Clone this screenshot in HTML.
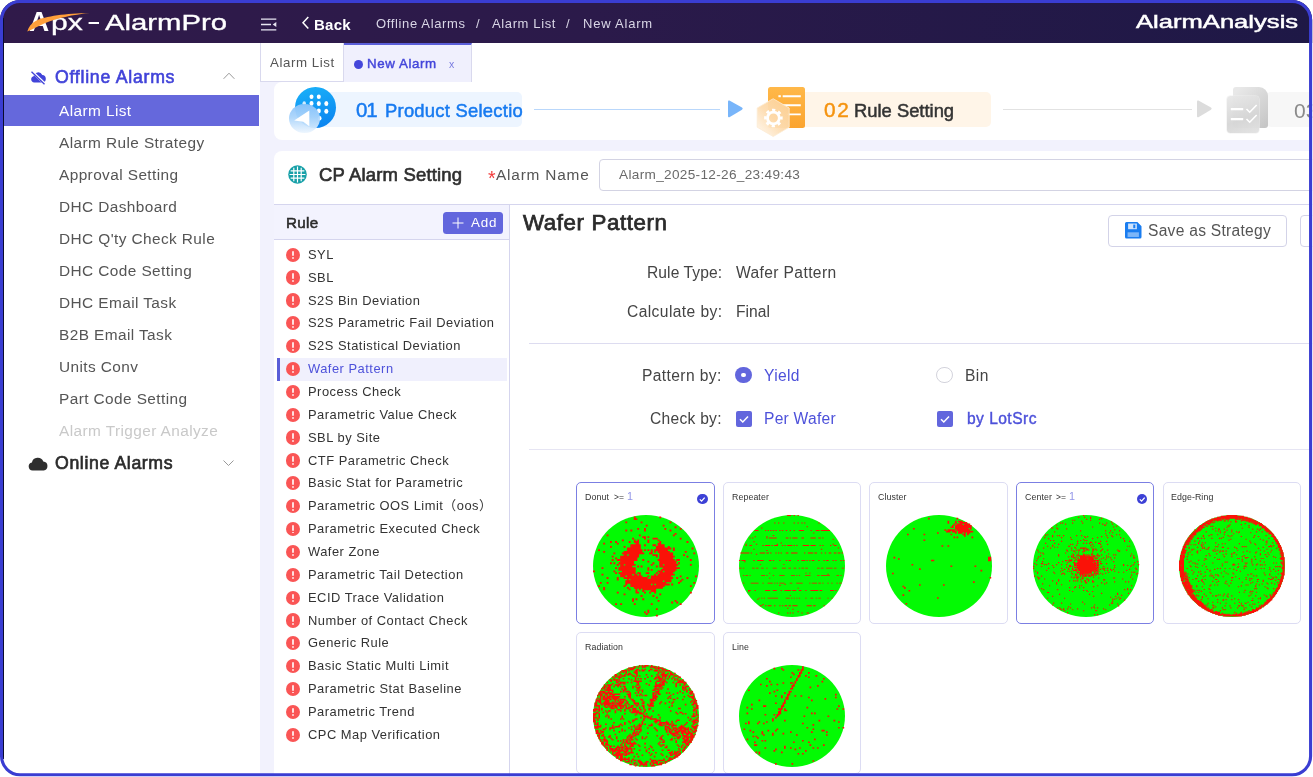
<!DOCTYPE html>
<html lang="en">
<head>
<meta charset="utf-8">
<title>Apx - AlarmPro</title>
<style>
*{box-sizing:border-box;margin:0;padding:0}
html,body{width:1313px;height:777px;overflow:hidden;background:#f2f2fd}
body{font-family:"Liberation Sans","Noto Sans CJK SC",sans-serif;color:#444;position:relative}
#frame{position:absolute;left:0;top:0;z-index:100}
#blk{position:absolute;left:3px;top:18px;width:1.2px;height:741px;background:#07071a;z-index:99}
.abs{position:absolute}
#hdr{position:absolute;left:0;top:0;width:1313px;height:43px;background:linear-gradient(90deg,#301a4a 0%,#2b1a4a 45%,#1e1846 100%)}
#side{position:absolute;left:4px;top:43px;width:256px;height:734px;background:#fff}
.t{position:absolute;white-space:nowrap;line-height:1;will-change:transform}
.mi{position:absolute;left:4px;width:255.3px;height:31.2px}
.mi.sel{background:#6568dc}
.card{position:absolute;background:#fff;border-radius:8px}
.ic{position:absolute;left:286.2px;width:14.2px;height:14.2px;border-radius:50%;background:#fa5555}
.ic:before{content:"";position:absolute;left:6.1px;top:3px;width:2px;height:5.6px;background:rgba(255,255,255,.82);border-radius:1px}
.ic:after{content:"";position:absolute;left:6.1px;top:9.6px;width:2px;height:1.9px;background:rgba(255,255,255,.82);border-radius:1px}
.wc{position:absolute;width:138.4px;height:141.4px;border:1px solid #dcdcf3;border-radius:5px;background:#fff}
.wc.on{border-color:#7b7fe3;border-top-width:1.6px}
.wf{position:absolute;left:12.6px;top:28.7px}
.ck{position:absolute;width:10.4px;height:10.4px;border-radius:50%;background:#3d41d6}
</style>
</head>
<body>
<!-- header -->
<div id="hdr"></div>
<svg class="abs" style="left:261px;top:18px" width="16" height="13" viewBox="0 0 16 13"><path d="M0 1.2h15.3M0 6.5h10M0 11.8h15.3" stroke="#e8e6f2" stroke-width="1.3" fill="none"/><path d="M15.3 4v5l-3.6-2.5z" fill="#e8e6f2"/></svg>
<svg class="abs" style="left:300.5px;top:15.8px" width="9" height="14" viewBox="0 0 9 14"><path d="M7.3 1L2 6.8l5.3 5.8" stroke="#fff" stroke-width="1.5" fill="none"/></svg>

<!-- sidebar -->
<div id="side"></div>
<svg class="abs" style="left:29.5px;top:69.5px" width="17" height="15" viewBox="0 0 17 15"><path d="M4.2 12.5a3.2 3.2 0 0 1-.6-6.3A4.6 4.6 0 0 1 12.3 5a3.8 3.8 0 0 1 .5 7.5z" fill="#4143d9"/><path d="M1.5 1l13.5 13" stroke="#fff" stroke-width="2.6"/><path d="M1.5 1.8l13 12.4" stroke="#4143d9" stroke-width="1.3"/></svg>
<svg class="abs" style="left:223px;top:72px" width="12" height="8" viewBox="0 0 12 8"><path d="M.6 6.8l5.4-5.6 5.4 5.6" stroke="#999" stroke-width="1" fill="none"/></svg>
<div class="mi sel" style="top:95px"></div>
<svg class="abs" style="left:27.5px;top:457px" width="20" height="13.5" viewBox="0 0 20 13.5"><path d="M4.6 13.5a4.1 4.1 0 0 1-.7-8.1A6 6 0 0 1 15.3 4.4a4.6 4.6 0 0 1 .4 9.1z" fill="#2e2e2e"/></svg>
<svg class="abs" style="left:222.5px;top:460px" width="11" height="6" viewBox="0 0 11 6"><path d="M.5.5l5 5 5-5" stroke="#999" stroke-width="1" fill="none"/></svg>

<!-- tabs -->
<div class="abs" style="left:260px;top:43px;width:1060px;height:39.4px;background:#fff"></div>
<div class="abs" style="left:260px;top:43px;width:84px;height:38.5px;background:#fff;border:1px solid #d9d9ee;border-top:none"></div>
<div class="abs" style="left:344px;top:43px;width:128px;height:38.5px;background:#f0f0fd;border-right:1px solid #d9d9ee;border-top:2.2px solid #5a5ed8"></div>
<div class="abs" style="left:354.3px;top:59.5px;width:9px;height:9px;border-radius:50%;background:#4446da"></div>

<!-- steps card -->
<div class="card" style="left:274px;top:82px;width:1045px;height:57.9px"></div>
<div class="abs" style="left:320px;top:92px;width:202.4px;height:34.8px;background:#edf5ff;border-radius:5px"></div>
<div class="abs" style="left:294.8px;top:86.8px;width:40.8px;height:40.8px;border-radius:50%;background:linear-gradient(165deg,#1ab2f9,#0a80ef)"></div>
<svg class="abs" style="left:294.8px;top:86.8px" width="40.8" height="40.8" viewBox="0 0 40.8 40.8"><g fill="#fff"><ellipse cx="16.5" cy="9.7" rx="2" ry="2.2"/><ellipse cx="23.8" cy="9.7" rx="2" ry="2.2"/><ellipse cx="9.2" cy="16.2" rx="1.7" ry="1.9" opacity=".8"/><ellipse cx="16.5" cy="16.4" rx="2" ry="2.3"/><ellipse cx="23.8" cy="16.6" rx="2" ry="2.5"/><ellipse cx="31.3" cy="16.6" rx="2" ry="2.5"/><ellipse cx="23.8" cy="24" rx="2" ry="2.4"/><ellipse cx="31.3" cy="24.2" rx="2" ry="2.5"/><ellipse cx="24.7" cy="31.3" rx="1.8" ry="2.2"/></g></svg>
<div class="abs" style="left:288.9px;top:103.6px;width:31.3px;height:29.8px;border-radius:50%;background:linear-gradient(180deg,rgba(138,195,250,.96) 0%,rgba(170,212,251,.95) 45%,rgba(236,245,254,.92) 100%)"></div>
<svg class="abs" style="left:288.9px;top:103.6px" width="31.3" height="29.8" viewBox="0 0 31.3 29.8"><path d="M20.3 6.6V22.2L14.3 17.8 5.2 16.6z" fill="#fff"/></svg>
<div class="abs" style="left:534px;top:108.9px;width:185.5px;height:1px;background:#b9d7fb"></div>
<svg class="abs" style="left:727px;top:99px" width="17" height="20" viewBox="0 0 17 20"><path d="M1 2.5Q1 1 2.4 1.6L15 8.6Q16.5 9.7 15 10.8L2.4 18.2Q1 18.8 1 17.3Z" fill="#78b5fa"/></svg>

<div class="abs" style="left:793px;top:92px;width:198.3px;height:34.8px;background:#fff5e8;border-radius:5px"></div>
<div class="abs" style="left:768.2px;top:87px;width:36.8px;height:41.3px;border-radius:2.5px;background:linear-gradient(180deg,#ffb849,#fba42f)"></div>
<svg class="abs" style="left:768.2px;top:87px" width="36.8" height="41.3" viewBox="0 0 36.8 41.3"><path d="M14.7 9.2H32.8M13.8 18.3H32.8M18.8 27.4H32.8" stroke="#fff" stroke-width="1.9"/><rect x="10.4" y="8.2" width="2.4" height="2" fill="#fff"/></svg>
<svg class="abs" style="left:756px;top:97.5px" width="34" height="40" viewBox="0 0 34 40"><defs><linearGradient id="hx" x1="1" y1="0" x2="0.1" y2="1"><stop offset="0" stop-color="#fccf92" stop-opacity=".97"/><stop offset=".55" stop-color="#fddcb0" stop-opacity=".95"/><stop offset="1" stop-color="#fff6ea" stop-opacity=".92"/></linearGradient></defs><path d="M17.2 0.7L33.2 10V29.2L17.2 38.5 1.2 29.2V10Z" fill="url(#hx)" stroke="#fdebd3" stroke-width=".8" stroke-linejoin="round"/><g transform="translate(17.4 20)"><circle r="8" fill="none" stroke="#fff" stroke-width="2.6" stroke-dasharray="3.14 3.143" transform="rotate(-11)"/><circle r="5.9" fill="none" stroke="#fff" stroke-width="2.8"/></g></svg>
<div class="abs" style="left:1003px;top:108.8px;width:189px;height:1px;background:#e2e2e2"></div>
<svg class="abs" style="left:1195.5px;top:99.2px" width="17" height="20" viewBox="0 0 17 20"><path d="M1 2.5Q1 1 2.4 1.6L15 8.6Q16.5 9.7 15 10.8L2.4 18.2Q1 18.8 1 17.3Z" fill="#dcdcdc"/></svg>
<div class="abs" style="left:1266px;top:92px;width:50px;height:34.8px;background:#f7f7f7;border-radius:5px 0 0 5px"></div>
<div class="abs" style="left:1233.1px;top:87.1px;width:35.2px;height:41.2px;border-radius:3px 9px 3px 3px;background:linear-gradient(135deg,#e8e8e8 10%,#c6c6c6 95%)"></div>
<div class="abs" style="left:1227px;top:95.8px;width:32.4px;height:37.5px;border-radius:3.5px;background:linear-gradient(160deg,rgba(232,232,232,.96),rgba(214,214,214,.96) 60%,rgba(226,226,226,.96));box-shadow:0 0 0 .6px rgba(238,238,238,.9)"></div>
<svg class="abs" style="left:1227px;top:95.8px" width="32.4" height="37.5" viewBox="0 0 32.4 37.5"><path d="M3.8 13.2h12.4M3.8 23.2h12.4" stroke="#fff" stroke-width="2.3"/><path d="M19.5 13l3.2 3.2 7-7.2M19.5 23l3.2 3.2 7-7.2" stroke="#fff" stroke-width="1.6" fill="none"/></svg>

<!-- CP Alarm Setting card -->
<div class="card" style="left:274px;top:150.5px;width:1045px;height:640px;border-radius:8px 0 0 0"></div>
<svg class="abs" style="left:287.7px;top:165.3px" width="19" height="19" viewBox="0 0 18 18"><circle cx="9" cy="9" r="8.8" fill="#17a0a8"/><path d="M5.5 2.5v13M9 1.5v15M12.5 2.5v13M2.5 5.5h13M1.5 9h15M2.5 12.5h13" stroke="#fff" stroke-width="1.1"/></svg>
<div class="abs" style="left:599.4px;top:159.3px;width:730px;height:31.6px;border:1px solid #d3d3e3;border-radius:4px;background:#fff"></div>

<!-- rule panel -->
<div class="abs" style="left:274px;top:204px;width:1045px;height:1px;background:#d5d5ee"></div>
<div class="abs" style="left:274px;top:205px;width:235px;height:34px;background:#f3f3fe"></div>
<div class="abs" style="left:274px;top:239px;width:235px;height:1px;background:#d5d5ee"></div>
<div class="abs" style="left:509px;top:204px;width:1px;height:580px;background:#d5d5ee"></div>
<div class="abs" style="left:443.3px;top:212px;width:59.7px;height:22px;border-radius:3.5px;background:#6266dd"></div>
<svg class="abs" style="left:451.5px;top:217px" width="12" height="12" viewBox="0 0 12 12"><path d="M6 .5v11M.5 6h11" stroke="#fff" stroke-width="1"/></svg>
<div class="abs" style="left:276.5px;top:358px;width:230px;height:22.8px;background:#f0f0fd"></div>
<div class="abs" style="left:276.5px;top:358px;width:3px;height:22.8px;background:#5a5ed8"></div>
<div class="ic" style="top:247.6px"></div>
<div class="ic" style="top:270.46px"></div>
<div class="ic" style="top:293.32px"></div>
<div class="ic" style="top:316.18px"></div>
<div class="ic" style="top:339.04px"></div>
<div class="ic" style="top:361.9px"></div>
<div class="ic" style="top:384.76px"></div>
<div class="ic" style="top:407.62px"></div>
<div class="ic" style="top:430.48px"></div>
<div class="ic" style="top:453.34px"></div>
<div class="ic" style="top:476.2px"></div>
<div class="ic" style="top:499.06px"></div>
<div class="ic" style="top:521.92px"></div>
<div class="ic" style="top:544.78px"></div>
<div class="ic" style="top:567.64px"></div>
<div class="ic" style="top:590.5px"></div>
<div class="ic" style="top:613.36px"></div>
<div class="ic" style="top:636.22px"></div>
<div class="ic" style="top:659.08px"></div>
<div class="ic" style="top:681.94px"></div>
<div class="ic" style="top:704.8px"></div>
<div class="ic" style="top:727.66px"></div>

<!-- detail panel -->
<div class="abs" style="left:1108.4px;top:215.4px;width:179px;height:32.1px;border:1px solid #d3d3e8;border-radius:4px;background:#fff"></div>
<svg class="abs" style="left:1125px;top:222px" width="16.5" height="16.5" viewBox="0 0 16 16"><path d="M1.5 0h10.5l4 4v10.5a1.5 1.5 0 0 1-1.5 1.5h-13a1.5 1.5 0 0 1-1.5-1.5v-13a1.5 1.5 0 0 1 1.5-1.5z" fill="#1a7df0"/><rect x="3" y="1.5" width="8.5" height="5.5" fill="#cfe4fd"/><rect x="8" y="2.5" width="2" height="3.5" fill="#1a7df0"/><rect x="2.5" y="10" width="11" height="4.5" fill="#7db6f8"/></svg>
<div class="abs" style="left:1300.4px;top:215.4px;width:30px;height:32.1px;border:1px solid #d3d3e8;border-radius:4px;background:#fff"></div>

<div class="abs" style="left:529px;top:343px;width:790px;height:1px;background:#dddcf0"></div>
<div class="abs" style="left:735.4px;top:367px;width:16.2px;height:16.2px;border-radius:50%;background:#6266dd"></div><div class="abs" style="left:741.3px;top:372.9px;width:4.4px;height:4.4px;border-radius:50%;background:#fff"></div>
<div class="abs" style="left:936.4px;top:367px;width:16.2px;height:16.2px;border-radius:50%;background:#fff;border:1px solid #d3d3dc"></div>
<div class="abs" style="left:735.5px;top:410.8px;width:16.2px;height:16px;border-radius:2px;background:#6266dd"></div>
<svg class="abs" style="left:735.5px;top:410.8px" width="16" height="16" viewBox="0 0 16 16"><path d="M4 8.2l2.8 2.8 5.2-5.6" stroke="#fff" stroke-width="1.5" fill="none"/></svg>
<div class="abs" style="left:936.5px;top:410.8px;width:16.2px;height:16px;border-radius:2px;background:#6266dd"></div>
<svg class="abs" style="left:936.5px;top:410.8px" width="16" height="16" viewBox="0 0 16 16"><path d="M4 8.2l2.8 2.8 5.2-5.6" stroke="#fff" stroke-width="1.5" fill="none"/></svg>
<div class="abs" style="left:529px;top:449px;width:790px;height:1px;background:#e6e5f3"></div>

<!-- wafer cards -->
<div class="wc on" style="left:576.2px;top:482.4px"><div class="ck" style="left:120.1px;top:10.5px"></div><svg class="abs" style="left:120.1px;top:10.5px" width="10.4" height="10.4" viewBox="0 0 10 10"><path d="M2.7 5.2l1.7 1.7 3-3.4" stroke="#fff" stroke-width="1.2" fill="none"/></svg><svg class="wf" width="112" height="107.8" viewBox="-56 -56 112 112" preserveAspectRatio="none"><circle r="53" fill="#03fa03"/><path d="M-12.2 -51.3h1.9v1.9h-1.9zM13.3 -51.3h1.9v1.9h-1.9zM-12.2 -49.6h3.6v1.9h-3.6zM-20.7 -46.2h1.9v1.9h-1.9zM-5.4 -46.2h1.9v1.9h-1.9zM23.5 -46.2h1.9v1.9h-1.9zM-.3 -42.8h1.9v1.9h-1.9zM16.7 -42.8h1.9v1.9h-1.9zM28.6 -41.1h1.9v1.9h-1.9zM-8.8 -39.4h1.9v1.9h-1.9zM-2 -39.4h1.9v1.9h-1.9zM18.4 -39.4h1.9v1.9h-1.9zM33.7 -39.4h1.9v1.9h-1.9zM-20.7 -37.7h1.9v1.9h-1.9zM-15.6 -37.7h1.9v1.9h-1.9zM-2 -37.7h1.9v1.9h-1.9zM23.5 -37.7h1.9v1.9h-1.9zM28.6 -34.3h1.9v1.9h-1.9zM-39.4 -32.6h1.9v1.9h-1.9zM-7.1 -32.6h1.9v1.9h-1.9zM26.9 -32.6h1.9v1.9h-1.9zM-3.7 -30.9h3.6v1.9h-3.6zM1.4 -30.9h1.9v1.9h-1.9zM-13.9 -29.2h1.9v1.9h-1.9zM-2 -29.2h1.9v1.9h-1.9zM6.5 -29.2h5.3v1.9h-5.3zM33.7 -29.2h1.9v1.9h-1.9zM-24.1 -27.5h1.9v1.9h-1.9zM-12.2 -27.5h1.9v1.9h-1.9zM-8.8 -27.5h1.9v1.9h-1.9zM1.4 -27.5h1.9v1.9h-1.9zM11.6 -27.5h1.9v1.9h-1.9zM-36 -25.8h1.9v1.9h-1.9zM-30.9 -25.8h1.9v1.9h-1.9zM-17.3 -25.8h1.9v1.9h-1.9zM-12.2 -25.8h5.3v1.9h-5.3zM1.4 -25.8h1.9v1.9h-1.9zM13.3 -25.8h1.9v1.9h-1.9zM40.5 -25.8h1.9v1.9h-1.9zM-42.8 -24.1h1.9v1.9h-1.9zM-29.2 -24.1h1.9v1.9h-1.9zM-10.5 -24.1h3.6v1.9h-3.6zM11.6 -24.1h3.6v1.9h-3.6zM-15.6 -22.4h10.4v1.9h-10.4zM-2 -22.4h1.9v1.9h-1.9zM6.5 -22.4h3.6v1.9h-3.6zM11.6 -22.4h7v1.9h-7zM-36 -20.7h1.9v1.9h-1.9zM-22.4 -20.7h1.9v1.9h-1.9zM-15.6 -20.7h10.4v1.9h-10.4zM9.9 -20.7h8.7v1.9h-8.7zM21.8 -20.7h1.9v1.9h-1.9zM-19 -19h13.8v1.9h-13.8zM9.9 -19h15.5v1.9h-15.5zM26.9 -19h1.9v1.9h-1.9zM45.6 -19h1.9v1.9h-1.9zM-47.9 -17.3h1.9v1.9h-1.9zM-19 -17.3h15.5v1.9h-15.5zM-2 -17.3h1.9v1.9h-1.9zM1.4 -17.3h1.9v1.9h-1.9zM4.8 -17.3h1.9v1.9h-1.9zM8.2 -17.3h13.8v1.9h-13.8zM26.9 -17.3h1.9v1.9h-1.9zM-42.8 -15.6h1.9v1.9h-1.9zM-22.4 -15.6h18.9v1.9h-18.9zM4.8 -15.6h1.9v1.9h-1.9zM8.2 -15.6h1.9v1.9h-1.9zM11.6 -15.6h12.1v1.9h-12.1zM38.8 -15.6h1.9v1.9h-1.9zM-32.6 -13.9h1.9v1.9h-1.9zM-24.1 -13.9h22.3v1.9h-22.3zM3.1 -13.9h3.6v1.9h-3.6zM13.3 -13.9h13.8v1.9h-13.8zM47.3 -13.9h1.9v1.9h-1.9zM-22.4 -12.2h3.6v1.9h-3.6zM-17.3 -12.2h10.4v1.9h-10.4zM6.5 -12.2h5.3v1.9h-5.3zM13.3 -12.2h13.8v1.9h-13.8zM37.1 -12.2h1.9v1.9h-1.9zM-34.3 -10.5h1.9v1.9h-1.9zM-25.8 -10.5h18.9v1.9h-18.9zM9.9 -10.5h1.9v1.9h-1.9zM13.3 -10.5h15.5v1.9h-15.5zM40.5 -10.5h1.9v1.9h-1.9zM-30.9 -8.8h1.9v1.9h-1.9zM-25.8 -8.8h17.2v1.9h-17.2zM13.3 -8.8h13.8v1.9h-13.8zM-34.3 -7.1h1.9v1.9h-1.9zM-29.2 -7.1h20.6v1.9h-20.6zM-3.7 -7.1h1.9v1.9h-1.9zM11.6 -7.1h17.2v1.9h-17.2zM30.3 -7.1h3.6v1.9h-3.6zM43.9 -7.1h1.9v1.9h-1.9zM-25.8 -5.4h13.8v1.9h-13.8zM1.4 -5.4h1.9v1.9h-1.9zM13.3 -5.4h17.2v1.9h-17.2zM-36 -3.7h1.9v1.9h-1.9zM-32.6 -3.7h1.9v1.9h-1.9zM-27.5 -3.7h15.5v1.9h-15.5zM6.5 -3.7h1.9v1.9h-1.9zM13.3 -3.7h17.2v1.9h-17.2zM32 -3.7h1.9v1.9h-1.9zM-29.2 -2h1.9v1.9h-1.9zM-25.8 -2h3.6v1.9h-3.6zM-20.7 -2h10.4v1.9h-10.4zM4.8 -2h1.9v1.9h-1.9zM13.3 -2h3.6v1.9h-3.6zM18.4 -2h13.8v1.9h-13.8zM43.9 -2h1.9v1.9h-1.9zM-25.8 -.3h12.1v1.9h-12.1zM-8.8 -.3h1.9v1.9h-1.9zM-5.4 -.3h1.9v1.9h-1.9zM9.9 -.3h1.9v1.9h-1.9zM13.3 -.3h17.2v1.9h-17.2zM-44.5 1.4h1.9v1.9h-1.9zM-30.9 1.4h1.9v1.9h-1.9zM-27.5 1.4h17.2v1.9h-17.2zM1.4 1.4h1.9v1.9h-1.9zM16.7 1.4h17.2v1.9h-17.2zM-27.5 3.1h17.2v1.9h-17.2zM1.4 3.1h1.9v1.9h-1.9zM4.8 3.1h1.9v1.9h-1.9zM15 3.1h15.5v1.9h-15.5zM-53 4.8h1.9v1.9h-1.9zM-32.6 4.8h1.9v1.9h-1.9zM-24.1 4.8h13.8v1.9h-13.8zM11.6 4.8h5.3v1.9h-5.3zM18.4 4.8h10.4v1.9h-10.4zM-30.9 6.5h1.9v1.9h-1.9zM-27.5 6.5h17.2v1.9h-17.2zM-8.8 6.5h3.6v1.9h-3.6zM-.3 6.5h3.6v1.9h-3.6zM9.9 6.5h1.9v1.9h-1.9zM13.3 6.5h13.8v1.9h-13.8zM-44.5 8.2h1.9v1.9h-1.9zM-25.8 8.2h12.1v1.9h-12.1zM-12.2 8.2h3.6v1.9h-3.6zM-7.1 8.2h1.9v1.9h-1.9zM8.2 8.2h1.9v1.9h-1.9zM11.6 8.2h17.2v1.9h-17.2zM-25.8 9.9h5.3v1.9h-5.3zM-19 9.9h15.5v1.9h-15.5zM1.4 9.9h1.9v1.9h-1.9zM4.8 9.9h20.6v1.9h-20.6zM33.7 9.9h1.9v1.9h-1.9zM49 9.9h1.9v1.9h-1.9zM-39.4 11.6h1.9v1.9h-1.9zM-29.2 11.6h1.9v1.9h-1.9zM-22.4 11.6h24v1.9h-24zM4.8 11.6h22.3v1.9h-22.3zM30.3 11.6h1.9v1.9h-1.9zM40.5 11.6h1.9v1.9h-1.9zM-29.2 13.3h1.9v1.9h-1.9zM-19 13.3h1.9v1.9h-1.9zM-15.6 13.3h41v1.9h-41zM35.4 13.3h1.9v1.9h-1.9zM-20.7 15h37.6v1.9h-37.6zM18.4 15h7v1.9h-7zM33.7 15h1.9v1.9h-1.9zM-46.2 16.7h1.9v1.9h-1.9zM-39.4 16.7h1.9v1.9h-1.9zM-20.7 16.7h41v1.9h-41zM32 16.7h1.9v1.9h-1.9zM47.3 16.7h1.9v1.9h-1.9zM-20.7 18.4h1.9v1.9h-1.9zM-15.6 18.4h20.6v1.9h-20.6zM6.5 18.4h1.9v1.9h-1.9zM9.9 18.4h13.8v1.9h-13.8zM25.2 18.4h1.9v1.9h-1.9zM-47.9 20.1h1.9v1.9h-1.9zM-22.4 20.1h1.9v1.9h-1.9zM-15.6 20.1h34.2v1.9h-34.2zM43.9 20.1h1.9v1.9h-1.9zM-42.8 21.8h1.9v1.9h-1.9zM-19 21.8h1.9v1.9h-1.9zM-12.2 21.8h29.1v1.9h-29.1zM-42.8 23.5h1.9v1.9h-1.9zM-17.3 23.5h1.9v1.9h-1.9zM-10.5 23.5h1.9v1.9h-1.9zM-7.1 23.5h1.9v1.9h-1.9zM-3.7 23.5h13.8v1.9h-13.8zM-10.5 25.2h1.9v1.9h-1.9zM-3.7 25.2h1.9v1.9h-1.9zM4.8 25.2h5.3v1.9h-5.3zM-29.2 26.9h1.9v1.9h-1.9zM-10.5 26.9h3.6v1.9h-3.6zM-2 26.9h1.9v1.9h-1.9zM3.1 26.9h1.9v1.9h-1.9zM8.2 26.9h1.9v1.9h-1.9zM43.9 26.9h1.9v1.9h-1.9zM-22.4 28.6h1.9v1.9h-1.9zM13.3 28.6h1.9v1.9h-1.9zM-5.4 30.3h1.9v1.9h-1.9zM6.5 30.3h1.9v1.9h-1.9zM9.9 32h1.9v1.9h-1.9zM-13.9 33.7h1.9v1.9h-1.9zM-10.5 33.7h1.9v1.9h-1.9zM-3.7 33.7h1.9v1.9h-1.9zM-13.9 35.4h1.9v1.9h-1.9zM11.6 35.4h1.9v1.9h-1.9zM28.6 35.4h1.9v1.9h-1.9zM25.2 37.1h1.9v1.9h-1.9zM30.3 37.1h1.9v1.9h-1.9zM-30.9 38.8h1.9v1.9h-1.9zM-25.8 38.8h1.9v1.9h-1.9zM-12.2 38.8h1.9v1.9h-1.9zM4.8 38.8h1.9v1.9h-1.9zM33.7 38.8h1.9v1.9h-1.9zM9.9 43.9h1.9v1.9h-1.9zM1.4 45.6h1.9v1.9h-1.9zM-2 47.3h1.9v1.9h-1.9zM1.4 47.3h1.9v1.9h-1.9zM-.3 49h1.9v1.9h-1.9zM9.9 50.7h1.9v1.9h-1.9z" fill="#fa1208"/></svg></div>
<div class="wc" style="left:722.8px;top:482.4px"><svg class="wf" width="112" height="107.8" viewBox="-56 -56 112 112" preserveAspectRatio="none"><circle r="53" fill="#03fa03"/><path d="M-4.9 -52.9h3.9v1h-3.9zM1.6 -52.9h1.3v1h-1.3zM5.5 -52.9h1.3v1h-1.3zM-17.9 -45h1.3v1h-1.3zM-14 -45h1.3v1h-1.3zM-8.8 -45h1.3v1h-1.3zM1.6 -45h1.3v1h-1.3zM5.5 -45h1.3v1h-1.3zM9.4 -45h1.3v1h-1.3zM12 -45h1.3v1h-1.3zM26.3 -45h1.3v1h-1.3zM14.6 -41.1h1.3v1h-1.3zM-30.9 -39.9h1.3v1h-1.3zM-37.4 -37.2h3.9v1h-3.9zM-27 -37.2h1.3v1h-1.3zM-24.4 -37.2h1.3v1h-1.3zM-21.8 -37.2h1.3v1h-1.3zM-19.2 -37.2h1.3v1h-1.3zM-16.6 -37.2h1.3v1h-1.3zM-12.7 -37.2h1.3v1h-1.3zM-10.1 -37.2h1.3v1h-1.3zM-6.2 -37.2h1.3v1h-1.3zM-2.3 -37.2h1.3v1h-1.3zM1.6 -37.2h1.3v1h-1.3zM6.8 -37.2h5.2v1h-5.2zM18.5 -37.2h1.3v1h-1.3zM23.7 -37.2h3.9v1h-3.9zM28.9 -37.2h9.1v1h-9.1zM21.1 -34.6h1.3v1h-1.3zM-19.2 -32h1.3v1h-1.3zM-37.4 -30.8h1.3v1h-1.3zM-25.7 -30.8h1.3v1h-1.3zM-42.6 -29.4h1.3v1h-1.3zM-40 -29.4h1.3v1h-1.3zM-25.7 -29.4h1.3v1h-1.3zM-23.1 -29.4h7.8v1h-7.8zM-6.2 -29.4h2.6v1h-2.6zM-2.3 -29.4h1.3v1h-1.3zM.3 -29.4h5.2v1h-5.2zM9.4 -29.4h2.6v1h-2.6zM18.5 -29.4h5.2v1h-5.2zM26.3 -29.4h2.6v1h-2.6zM30.2 -29.4h1.3v1h-1.3zM40.6 -28.1h1.3v1h-1.3zM-38.7 -25.6h1.3v1h-1.3zM-11.4 -24.2h1.3v1h-1.3zM-46.5 -22.9h1.3v1h-1.3zM-36.1 -22.9h1.3v1h-1.3zM-15.3 -22.9h1.3v1h-1.3zM40.6 -22.9h1.3v1h-1.3zM-46.5 -21.6h1.3v1h-1.3zM-42.6 -21.6h2.6v1h-2.6zM-29.6 -21.6h1.3v1h-1.3zM-27 -21.6h5.2v1h-5.2zM-20.5 -21.6h1.3v1h-1.3zM-17.9 -21.6h3.9v1h-3.9zM-10.1 -21.6h1.3v1h-1.3zM-7.5 -21.6h1.3v1h-1.3zM-4.9 -21.6h5.2v1h-5.2zM1.6 -21.6h1.3v1h-1.3zM4.2 -21.6h1.3v1h-1.3zM10.7 -21.6h6.5v1h-6.5zM18.5 -21.6h5.2v1h-5.2zM27.6 -21.6h1.3v1h-1.3zM30.2 -21.6h1.3v1h-1.3zM38 -21.6h1.3v1h-1.3zM41.9 -21.6h2.6v1h-2.6zM45.8 -19.1h1.3v1h-1.3zM-38.7 -17.8h1.3v1h-1.3zM28.9 -17.8h1.3v1h-1.3zM-25.7 -16.4h1.3v1h-1.3zM-51.7 -13.8h9.1v1h-9.1zM-41.3 -13.8h1.3v1h-1.3zM-32.2 -13.8h5.2v1h-5.2zM-25.7 -13.8h2.6v1h-2.6zM-21.8 -13.8h1.3v1h-1.3zM-16.6 -13.8h1.3v1h-1.3zM-14 -13.8h1.3v1h-1.3zM-11.4 -13.8h1.3v1h-1.3zM-6.2 -13.8h2.6v1h-2.6zM-1 -13.8h6.5v1h-6.5zM12 -13.8h1.3v1h-1.3zM15.9 -13.8h5.2v1h-5.2zM22.4 -13.8h2.6v1h-2.6zM28.9 -13.8h1.3v1h-1.3zM32.8 -13.8h1.3v1h-1.3zM36.7 -13.8h2.6v1h-2.6zM41.9 -13.8h2.6v1h-2.6zM45.8 -13.8h2.6v1h-2.6zM49.7 -13.8h1.3v1h-1.3zM-36.1 -12.6h1.3v1h-1.3zM-53 -6h1.3v1h-1.3zM-50.4 -6h3.9v1h-3.9zM-38.7 -6h1.3v1h-1.3zM-34.8 -6h6.5v1h-6.5zM-23.1 -6h2.6v1h-2.6zM-19.2 -6h1.3v1h-1.3zM-12.7 -6h1.3v1h-1.3zM-6.2 -6h1.3v1h-1.3zM-3.6 -6h2.6v1h-2.6zM5.5 -6h1.3v1h-1.3zM9.4 -6h3.9v1h-3.9zM14.6 -6h1.3v1h-1.3zM17.2 -6h1.3v1h-1.3zM19.8 -6h2.6v1h-2.6zM26.3 -6h1.3v1h-1.3zM31.5 -6h1.3v1h-1.3zM34.1 -6h2.6v1h-2.6zM40.6 -6h1.3v1h-1.3zM43.2 -6h1.3v1h-1.3zM48.4 -6h1.3v1h-1.3zM51 -6h1.3v1h-1.3zM-47.8 -4.8h1.3v1h-1.3zM-32.2 -2.1h1.3v1h-1.3zM-8.8 -2.1h1.3v1h-1.3zM-53 1.8h2.6v1h-2.6zM-49.1 1.8h1.3v1h-1.3zM-40 1.8h2.6v1h-2.6zM-36.1 1.8h2.6v1h-2.6zM-30.9 1.8h2.6v1h-2.6zM-25.7 1.8h1.3v1h-1.3zM-19.2 1.8h3.9v1h-3.9zM-10.1 1.8h3.9v1h-3.9zM-3.6 1.8h2.6v1h-2.6zM1.6 1.8h2.6v1h-2.6zM6.8 1.8h1.3v1h-1.3zM9.4 1.8h2.6v1h-2.6zM13.3 1.8h2.6v1h-2.6zM25 1.8h2.6v1h-2.6zM28.9 1.8h2.6v1h-2.6zM34.1 1.8h6.5v1h-6.5zM41.9 1.8h2.6v1h-2.6zM49.7 1.8h2.6v1h-2.6zM-23.1 7h1.3v1h-1.3zM13.3 7h1.3v1h-1.3zM17.2 7h1.3v1h-1.3zM35.4 8.2h1.3v1h-1.3zM-49.1 9.6h1.3v1h-1.3zM-46.5 9.6h2.6v1h-2.6zM-42.6 9.6h1.3v1h-1.3zM-30.9 9.6h3.9v1h-3.9zM-25.7 9.6h1.3v1h-1.3zM-19.2 9.6h1.3v1h-1.3zM-12.7 9.6h5.2v1h-5.2zM-1 9.6h3.9v1h-3.9zM4.2 9.6h1.3v1h-1.3zM6.8 9.6h1.3v1h-1.3zM13.3 9.6h5.2v1h-5.2zM25 9.6h2.6v1h-2.6zM28.9 9.6h9.1v1h-9.1zM44.5 9.6h2.6v1h-2.6zM48.4 9.6h1.3v1h-1.3zM-23.1 12.2h1.3v1h-1.3zM-49.1 17.4h1.3v1h-1.3zM-41.3 17.4h7.8v1h-7.8zM-29.6 17.4h1.3v1h-1.3zM-24.4 17.4h5.2v1h-5.2zM-17.9 17.4h1.3v1h-1.3zM-15.3 17.4h1.3v1h-1.3zM-12.7 17.4h5.2v1h-5.2zM-2.3 17.4h2.6v1h-2.6zM4.2 17.4h6.5v1h-6.5zM17.2 17.4h1.3v1h-1.3zM19.8 17.4h5.2v1h-5.2zM26.3 17.4h2.6v1h-2.6zM30.2 17.4h1.3v1h-1.3zM35.4 17.4h1.3v1h-1.3zM39.3 17.4h1.3v1h-1.3zM44.5 17.4h1.3v1h-1.3zM47.1 17.4h2.6v1h-2.6zM-7.5 18.6h1.3v1h-1.3zM-12.7 19.9h1.3v1h-1.3zM5.5 22.6h1.3v1h-1.3zM-43.9 25.1h2.6v1h-2.6zM-37.4 25.1h1.3v1h-1.3zM-27 25.1h5.2v1h-5.2zM-19.2 25.1h3.9v1h-3.9zM-11.4 25.1h1.3v1h-1.3zM-7.5 25.1h6.5v1h-6.5zM.3 25.1h3.9v1h-3.9zM6.8 25.1h2.6v1h-2.6zM13.3 25.1h1.3v1h-1.3zM18.5 25.1h7.8v1h-7.8zM27.6 25.1h2.6v1h-2.6zM38 25.1h3.9v1h-3.9zM43.2 25.1h1.3v1h-1.3zM-43.9 26.4h1.3v1h-1.3zM-2.3 30.4h1.3v1h-1.3zM-33.5 33h1.3v1h-1.3zM-30.9 33h1.3v1h-1.3zM-28.3 33h1.3v1h-1.3zM-24.4 33h10.4v1h-10.4zM-6.2 33h3.9v1h-3.9zM-1 33h1.3v1h-1.3zM1.6 33h1.3v1h-1.3zM4.2 33h1.3v1h-1.3zM6.8 33h1.3v1h-1.3zM13.3 33h1.3v1h-1.3zM18.5 33h2.6v1h-2.6zM23.7 33h1.3v1h-1.3zM26.3 33h2.6v1h-2.6zM35.4 33h1.3v1h-1.3zM39.3 33h1.3v1h-1.3zM-34.8 34.2h1.3v1h-1.3zM-29.6 39.5h1.3v1h-1.3zM-32.2 40.8h2.6v1h-2.6zM-27 40.8h1.3v1h-1.3zM-24.4 40.8h3.9v1h-3.9zM-17.9 40.8h1.3v1h-1.3zM-12.7 40.8h1.3v1h-1.3zM-10.1 40.8h1.3v1h-1.3zM-7.5 40.8h2.6v1h-2.6zM-3.6 40.8h2.6v1h-2.6zM.3 40.8h5.2v1h-5.2zM14.6 40.8h5.2v1h-5.2zM21.1 40.8h2.6v1h-2.6zM31.5 40.8h1.3v1h-1.3zM-4.9 43.4h1.3v1h-1.3zM.3 44.6h1.3v1h-1.3zM5.5 47.2h1.3v1h-1.3zM-14 48.5h1.3v1h-1.3zM-4.9 48.5h1.3v1h-1.3zM-2.3 48.5h1.3v1h-1.3zM.3 48.5h1.3v1h-1.3zM9.4 48.5h1.3v1h-1.3zM14.6 48.5h2.6v1h-2.6z" fill="#fa1208"/></svg></div>
<div class="wc" style="left:869.4px;top:482.4px"><svg class="wf" width="112" height="107.8" viewBox="-56 -56 112 112" preserveAspectRatio="none"><circle r="53" fill="#03fa03"/><path d="M-11 -50h1.7v1.7h-1.7zM17.5 -50h1.7v1.7h-1.7zM8.5 -47h1.7v1.7h-1.7zM16 -47h1.7v1.7h-1.7zM19 -47h4.7v1.7h-4.7zM8.5 -45.5h1.7v1.7h-1.7zM16 -45.5h1.7v1.7h-1.7zM20.5 -45.5h7.7v1.7h-7.7zM14.5 -44h1.7v1.7h-1.7zM17.5 -44h6.2v1.7h-6.2zM25 -44h6.2v1.7h-6.2zM13 -42.5h1.7v1.7h-1.7zM16 -42.5h16.7v1.7h-16.7zM11.5 -41h3.2v1.7h-3.2zM16 -41h16.7v1.7h-16.7zM-26 -39.5h1.7v1.7h-1.7zM16 -39.5h13.7v1.7h-13.7zM31 -39.5h1.7v1.7h-1.7zM5.5 -38h1.7v1.7h-1.7zM8.5 -38h7.7v1.7h-7.7zM17.5 -38h13.7v1.7h-13.7zM7 -36.5h4.7v1.7h-4.7zM13 -36.5h4.7v1.7h-4.7zM19 -36.5h15.2v1.7h-15.2zM-2 -35h1.7v1.7h-1.7zM16 -35h1.7v1.7h-1.7zM19 -35h4.7v1.7h-4.7zM25 -35h1.7v1.7h-1.7zM28 -35h3.2v1.7h-3.2zM-32 -33.5h1.7v1.7h-1.7zM-15.5 -33.5h1.7v1.7h-1.7zM11.5 -33.5h1.7v1.7h-1.7zM23.5 -33.5h3.2v1.7h-3.2zM28 -33.5h1.7v1.7h-1.7zM25 -32h1.7v1.7h-1.7zM14.5 -30.5h1.7v1.7h-1.7zM17.5 -30.5h1.7v1.7h-1.7zM32.5 -30.5h1.7v1.7h-1.7zM-15.5 -27.5h1.7v1.7h-1.7zM2.5 -21.5h1.7v1.7h-1.7zM8.5 -21.5h1.7v1.7h-1.7zM-45.5 -9.5h1.7v1.7h-1.7zM49 -9.5h3.2v1.7h-3.2zM-41 -8h1.7v1.7h-1.7zM49 -8h3.2v1.7h-3.2zM-8 -6.5h3.2v1.7h-3.2zM49 -6.5h3.2v1.7h-3.2zM-27.5 -2h1.7v1.7h-1.7zM11.5 -.5h1.7v1.7h-1.7zM35.5 -.5h1.7v1.7h-1.7zM-20 2.5h1.7v1.7h-1.7zM41.5 4h1.7v1.7h-1.7zM-47 7h1.7v1.7h-1.7zM50.5 11.5h1.7v1.7h-1.7zM34 16h1.7v1.7h-1.7zM-20 19h1.7v1.7h-1.7zM4 19h1.7v1.7h-1.7zM-36.5 20.5h1.7v1.7h-1.7zM-35 22h1.7v1.7h-1.7zM-30.5 25h1.7v1.7h-1.7zM-36.5 29.5h1.7v1.7h-1.7zM-2 32.5h1.7v1.7h-1.7zM-33.5 38.5h1.7v1.7h-1.7z" fill="#fa1208"/></svg></div>
<div class="wc on" style="left:1016px;top:482.4px"><div class="ck" style="left:120.1px;top:10.5px"></div><svg class="abs" style="left:120.1px;top:10.5px" width="10.4" height="10.4" viewBox="0 0 10 10"><path d="M2.7 5.2l1.7 1.7 3-3.4" stroke="#fff" stroke-width="1.2" fill="none"/></svg><svg class="wf" width="112" height="107.8" viewBox="-56 -56 112 112" preserveAspectRatio="none"><circle r="53" fill="#03fa03"/><path d="M-3 -53h1.2v1.2h-1.2zM-8 -51h1.2v1.2h-1.2zM-2 -51h1.2v1.2h-1.2zM4 -51h1.2v1.2h-1.2zM4 -50h1.2v1.2h-1.2zM15 -50h1.2v1.2h-1.2zM0 -49h1.2v1.2h-1.2zM13 -49h1.2v1.2h-1.2zM-14 -48h1.2v1.2h-1.2zM-12 -48h1.2v1.2h-1.2zM4 -48h1.2v1.2h-1.2zM-5 -47h1.2v1.2h-1.2zM25 -46h1.2v1.2h-1.2zM-26 -45h1.2v1.2h-1.2zM-24 -45h1.2v1.2h-1.2zM-14 -45h1.2v1.2h-1.2zM-4 -45h1.2v1.2h-1.2zM13 -45h1.2v1.2h-1.2zM20 -45h1.2v1.2h-1.2zM-21 -44h1.2v1.2h-1.2zM16 -44h1.2v1.2h-1.2zM26 -44h1.2v1.2h-1.2zM-30 -43h1.2v1.2h-1.2zM18 -43h2.2v1.2h-2.2zM30 -42h1.2v1.2h-1.2zM6 -41h1.2v1.2h-1.2zM27 -41h1.2v1.2h-1.2zM-35 -40h2.2v1.2h-2.2zM-30 -40h1.2v1.2h-1.2zM-29 -39h1.2v1.2h-1.2zM-20 -39h1.2v1.2h-1.2zM28 -38h1.2v1.2h-1.2zM-6 -37h1.2v1.2h-1.2zM19 -37h1.2v1.2h-1.2zM24 -37h1.2v1.2h-1.2zM33 -37h1.2v1.2h-1.2zM-32 -36h1.2v1.2h-1.2zM23 -35h1.2v1.2h-1.2zM26 -35h1.2v1.2h-1.2zM19 -34h1.2v1.2h-1.2zM-41 -33h1.2v1.2h-1.2zM-39 -33h1.2v1.2h-1.2zM30 -33h1.2v1.2h-1.2zM33 -33h1.2v1.2h-1.2zM-41 -32h1.2v1.2h-1.2zM-34 -32h1.2v1.2h-1.2zM-29 -32h1.2v1.2h-1.2zM-27 -32h1.2v1.2h-1.2zM-23 -32h1.2v1.2h-1.2zM-10 -32h1.2v1.2h-1.2zM-5 -32h1.2v1.2h-1.2zM20 -32h1.2v1.2h-1.2zM25 -32h1.2v1.2h-1.2zM-34 -31h1.2v1.2h-1.2zM-2 -31h1.2v1.2h-1.2zM1 -31h1.2v1.2h-1.2zM15 -31h1.2v1.2h-1.2zM26 -31h1.2v1.2h-1.2zM-42 -30h1.2v1.2h-1.2zM-25 -30h1.2v1.2h-1.2zM-16 -30h1.2v1.2h-1.2zM-1 -30h1.2v1.2h-1.2zM11 -30h1.2v1.2h-1.2zM21 -30h1.2v1.2h-1.2zM34 -30h1.2v1.2h-1.2zM-38 -29h1.2v1.2h-1.2zM6 -29h1.2v1.2h-1.2zM37 -29h1.2v1.2h-1.2zM-15 -28h1.2v1.2h-1.2zM-3 -28h1.2v1.2h-1.2zM-36 -27h1.2v1.2h-1.2zM-33 -27h1.2v1.2h-1.2zM-6 -27h1.2v1.2h-1.2zM-2 -27h1.2v1.2h-1.2zM0 -27h1.2v1.2h-1.2zM38 -27h1.2v1.2h-1.2zM-25 -26h1.2v1.2h-1.2zM-9 -26h1.2v1.2h-1.2zM14 -26h1.2v1.2h-1.2zM20 -26h1.2v1.2h-1.2zM38 -26h1.2v1.2h-1.2zM43 -26h1.2v1.2h-1.2zM4 -25h2.2v1.2h-2.2zM9 -25h1.2v1.2h-1.2zM-41 -24h1.2v1.2h-1.2zM-32 -24h1.2v1.2h-1.2zM-9 -24h1.2v1.2h-1.2zM-3 -24h1.2v1.2h-1.2zM0 -24h1.2v1.2h-1.2zM3 -24h1.2v1.2h-1.2zM12 -24h2.2v1.2h-2.2zM-28 -23h1.2v1.2h-1.2zM-16 -23h1.2v1.2h-1.2zM-14 -23h1.2v1.2h-1.2zM6 -23h1.2v1.2h-1.2zM14 -23h1.2v1.2h-1.2zM21 -23h1.2v1.2h-1.2zM-34 -22h1.2v1.2h-1.2zM-10 -22h1.2v1.2h-1.2zM4 -22h1.2v1.2h-1.2zM-39 -21h1.2v1.2h-1.2zM-34 -21h1.2v1.2h-1.2zM-18 -21h2.2v1.2h-2.2zM7 -21h1.2v1.2h-1.2zM15 -21h1.2v1.2h-1.2zM41 -21h1.2v1.2h-1.2zM43 -21h1.2v1.2h-1.2zM-32 -20h1.2v1.2h-1.2zM-29 -20h1.2v1.2h-1.2zM-12 -20h1.2v1.2h-1.2zM5 -20h1.2v1.2h-1.2zM14 -20h1.2v1.2h-1.2zM-43 -19h1.2v1.2h-1.2zM-36 -19h1.2v1.2h-1.2zM-15 -19h1.2v1.2h-1.2zM-11 -19h1.2v1.2h-1.2zM-6 -19h6.2v1.2h-6.2zM-3 -18h1.2v1.2h-1.2zM0 -18h2.2v1.2h-2.2zM6 -18h2.2v1.2h-2.2zM9 -18h1.2v1.2h-1.2zM16 -18h1.2v1.2h-1.2zM-49 -17h1.2v1.2h-1.2zM-20 -17h1.2v1.2h-1.2zM-15 -17h1.2v1.2h-1.2zM-10 -17h1.2v1.2h-1.2zM-8 -17h2.2v1.2h-2.2zM-2 -17h1.2v1.2h-1.2zM0 -17h1.2v1.2h-1.2zM2 -17h1.2v1.2h-1.2zM7 -17h1.2v1.2h-1.2zM10 -17h1.2v1.2h-1.2zM15 -17h1.2v1.2h-1.2zM21 -17h1.2v1.2h-1.2zM31 -17h1.2v1.2h-1.2zM40 -17h1.2v1.2h-1.2zM-19 -16h1.2v1.2h-1.2zM-13 -16h2.2v1.2h-2.2zM-3 -16h2.2v1.2h-2.2zM6 -16h1.2v1.2h-1.2zM14 -16h1.2v1.2h-1.2zM32 -16h2.2v1.2h-2.2zM-48 -15h1.2v1.2h-1.2zM-8 -15h1.2v1.2h-1.2zM-4 -15h1.2v1.2h-1.2zM18 -15h1.2v1.2h-1.2zM-46 -14h1.2v1.2h-1.2zM-44 -14h1.2v1.2h-1.2zM-21 -14h1.2v1.2h-1.2zM-11 -14h1.2v1.2h-1.2zM6 -14h1.2v1.2h-1.2zM-43 -13h1.2v1.2h-1.2zM-14 -13h1.2v1.2h-1.2zM-8 -13h1.2v1.2h-1.2zM-3 -13h1.2v1.2h-1.2zM5 -13h1.2v1.2h-1.2zM11 -13h1.2v1.2h-1.2zM22 -13h1.2v1.2h-1.2zM45 -13h1.2v1.2h-1.2zM-28 -12h1.2v1.2h-1.2zM-13 -12h1.2v1.2h-1.2zM-9 -12h1.2v1.2h-1.2zM-3 -12h2.2v1.2h-2.2zM0 -12h1.2v1.2h-1.2zM2 -12h1.2v1.2h-1.2zM5 -12h2.2v1.2h-2.2zM11 -12h1.2v1.2h-1.2zM15 -12h1.2v1.2h-1.2zM27 -12h1.2v1.2h-1.2zM29 -12h1.2v1.2h-1.2zM-46 -11h1.2v1.2h-1.2zM-28 -11h1.2v1.2h-1.2zM-15 -11h1.2v1.2h-1.2zM-13 -11h1.2v1.2h-1.2zM-10 -11h1.2v1.2h-1.2zM-8 -11h8.2v1.2h-8.2zM1 -11h1.2v1.2h-1.2zM3 -11h1.2v1.2h-1.2zM7 -11h2.2v1.2h-2.2zM10 -11h1.2v1.2h-1.2zM12 -11h2.2v1.2h-2.2zM20 -11h1.2v1.2h-1.2zM44 -11h1.2v1.2h-1.2zM47 -11h1.2v1.2h-1.2zM-48 -10h1.2v1.2h-1.2zM-18 -10h1.2v1.2h-1.2zM-15 -10h2.2v1.2h-2.2zM-6 -10h15.2v1.2h-15.2zM22 -10h1.2v1.2h-1.2zM-13 -9h3.2v1.2h-3.2zM-9 -9h1.2v1.2h-1.2zM-6 -9h13.2v1.2h-13.2zM9 -9h1.2v1.2h-1.2zM11 -9h1.2v1.2h-1.2zM17 -9h1.2v1.2h-1.2zM20 -9h1.2v1.2h-1.2zM24 -9h1.2v1.2h-1.2zM28 -9h1.2v1.2h-1.2zM47 -9h2.2v1.2h-2.2zM-49 -8h1.2v1.2h-1.2zM-43 -8h1.2v1.2h-1.2zM-8 -8h1.2v1.2h-1.2zM-6 -8h7.2v1.2h-7.2zM2 -8h6.2v1.2h-6.2zM9 -8h2.2v1.2h-2.2zM15 -8h1.2v1.2h-1.2zM-17 -7h1.2v1.2h-1.2zM-15 -7h1.2v1.2h-1.2zM-11 -7h2.2v1.2h-2.2zM-8 -7h16.2v1.2h-16.2zM13 -7h1.2v1.2h-1.2zM19 -7h1.2v1.2h-1.2zM25 -7h1.2v1.2h-1.2zM-50 -6h1.2v1.2h-1.2zM-21 -6h2.2v1.2h-2.2zM-18 -6h1.2v1.2h-1.2zM-16 -6h2.2v1.2h-2.2zM-12 -6h1.2v1.2h-1.2zM-9 -6h22.2v1.2h-22.2zM-44 -5h1.2v1.2h-1.2zM-24 -5h1.2v1.2h-1.2zM-17 -5h1.2v1.2h-1.2zM-8 -5h17.2v1.2h-17.2zM11 -5h1.2v1.2h-1.2zM14 -5h1.2v1.2h-1.2zM27 -5h1.2v1.2h-1.2zM51 -5h1.2v1.2h-1.2zM-28 -4h1.2v1.2h-1.2zM-19 -4h1.2v1.2h-1.2zM-13 -4h2.2v1.2h-2.2zM-9 -4h16.2v1.2h-16.2zM8 -4h2.2v1.2h-2.2zM11 -4h2.2v1.2h-2.2zM48 -4h1.2v1.2h-1.2zM-52 -3h1.2v1.2h-1.2zM-45 -3h2.2v1.2h-2.2zM-38 -3h1.2v1.2h-1.2zM-12 -3h24.2v1.2h-24.2zM14 -3h2.2v1.2h-2.2zM20 -3h1.2v1.2h-1.2zM-50 -2h1.2v1.2h-1.2zM-42 -2h1.2v1.2h-1.2zM-40 -2h1.2v1.2h-1.2zM-30 -2h1.2v1.2h-1.2zM-25 -2h1.2v1.2h-1.2zM-20 -2h1.2v1.2h-1.2zM-12 -2h2.2v1.2h-2.2zM-9 -2h19.2v1.2h-19.2zM11 -2h2.2v1.2h-2.2zM37 -2h1.2v1.2h-1.2zM47 -2h1.2v1.2h-1.2zM52 -2h1.2v1.2h-1.2zM-34 -1h1.2v1.2h-1.2zM-17 -1h2.2v1.2h-2.2zM-12 -1h25.2v1.2h-25.2zM28 -1h1.2v1.2h-1.2zM37 -1h1.2v1.2h-1.2zM41 -1h1.2v1.2h-1.2zM45 -1h1.2v1.2h-1.2zM-53 0h1.2v1.2h-1.2zM-45 0h1.2v1.2h-1.2zM-17 0h2.2v1.2h-2.2zM-14 0h1.2v1.2h-1.2zM-9 0h19.2v1.2h-19.2zM11 0h1.2v1.2h-1.2zM17 0h1.2v1.2h-1.2zM44 0h1.2v1.2h-1.2zM-33 1h1.2v1.2h-1.2zM-20 1h1.2v1.2h-1.2zM-12 1h25.2v1.2h-25.2zM28 1h1.2v1.2h-1.2zM-53 2h1.2v1.2h-1.2zM-38 2h1.2v1.2h-1.2zM-25 2h1.2v1.2h-1.2zM-18 2h1.2v1.2h-1.2zM-14 2h1.2v1.2h-1.2zM-9 2h21.2v1.2h-21.2zM16 2h1.2v1.2h-1.2zM18 2h1.2v1.2h-1.2zM21 2h1.2v1.2h-1.2zM49 2h1.2v1.2h-1.2zM-22 3h1.2v1.2h-1.2zM-18 3h1.2v1.2h-1.2zM-14 3h1.2v1.2h-1.2zM-11 3h2.2v1.2h-2.2zM-8 3h19.2v1.2h-19.2zM12 3h1.2v1.2h-1.2zM14 3h1.2v1.2h-1.2zM17 3h1.2v1.2h-1.2zM24 3h1.2v1.2h-1.2zM27 3h1.2v1.2h-1.2zM43 3h1.2v1.2h-1.2zM50 3h1.2v1.2h-1.2zM-40 4h1.2v1.2h-1.2zM-24 4h1.2v1.2h-1.2zM-13 4h4.2v1.2h-4.2zM-8 4h16.2v1.2h-16.2zM9 4h3.2v1.2h-3.2zM18 4h1.2v1.2h-1.2zM21 4h1.2v1.2h-1.2zM25 4h1.2v1.2h-1.2zM40 4h1.2v1.2h-1.2zM-51 5h1.2v1.2h-1.2zM-26 5h1.2v1.2h-1.2zM-19 5h1.2v1.2h-1.2zM-17 5h1.2v1.2h-1.2zM-15 5h1.2v1.2h-1.2zM-10 5h1.2v1.2h-1.2zM-6 5h12.2v1.2h-12.2zM7 5h4.2v1.2h-4.2zM12 5h1.2v1.2h-1.2zM28 5h1.2v1.2h-1.2zM-49 6h1.2v1.2h-1.2zM-33 6h1.2v1.2h-1.2zM-9 6h15.2v1.2h-15.2zM8 6h1.2v1.2h-1.2zM11 6h1.2v1.2h-1.2zM22 6h1.2v1.2h-1.2zM32 6h1.2v1.2h-1.2zM37 6h1.2v1.2h-1.2zM45 6h1.2v1.2h-1.2zM47 6h2.2v1.2h-2.2zM-49 7h1.2v1.2h-1.2zM-32 7h1.2v1.2h-1.2zM-24 7h2.2v1.2h-2.2zM-15 7h1.2v1.2h-1.2zM-9 7h1.2v1.2h-1.2zM-6 7h11.2v1.2h-11.2zM8 7h4.2v1.2h-4.2zM14 7h1.2v1.2h-1.2zM19 7h1.2v1.2h-1.2zM51 7h1.2v1.2h-1.2zM-25 8h1.2v1.2h-1.2zM-22 8h1.2v1.2h-1.2zM-14 8h1.2v1.2h-1.2zM-11 8h1.2v1.2h-1.2zM-7 8h5.2v1.2h-5.2zM-1 8h1.2v1.2h-1.2zM1 8h1.2v1.2h-1.2zM5 8h1.2v1.2h-1.2zM7 8h1.2v1.2h-1.2zM10 8h1.2v1.2h-1.2zM12 8h1.2v1.2h-1.2zM16 8h1.2v1.2h-1.2zM50 8h1.2v1.2h-1.2zM-11 9h2.2v1.2h-2.2zM-6 9h1.2v1.2h-1.2zM-4 9h1.2v1.2h-1.2zM-2 9h3.2v1.2h-3.2zM2 9h2.2v1.2h-2.2zM5 9h3.2v1.2h-3.2zM9 9h1.2v1.2h-1.2zM45 9h1.2v1.2h-1.2zM-52 10h1.2v1.2h-1.2zM-45 10h1.2v1.2h-1.2zM-6 10h1.2v1.2h-1.2zM-4 10h5.2v1.2h-5.2zM2 10h3.2v1.2h-3.2zM-49 11h1.2v1.2h-1.2zM-15 11h1.2v1.2h-1.2zM-12 11h1.2v1.2h-1.2zM-10 11h3.2v1.2h-3.2zM7 11h1.2v1.2h-1.2zM44 11h1.2v1.2h-1.2zM-48 12h2.2v1.2h-2.2zM-13 12h1.2v1.2h-1.2zM-10 12h1.2v1.2h-1.2zM-5 12h3.2v1.2h-3.2zM12 12h1.2v1.2h-1.2zM27 12h2.2v1.2h-2.2zM-48 13h1.2v1.2h-1.2zM-42 13h1.2v1.2h-1.2zM-9 13h1.2v1.2h-1.2zM-4 13h1.2v1.2h-1.2zM0 13h2.2v1.2h-2.2zM36 13h1.2v1.2h-1.2zM46 13h1.2v1.2h-1.2zM-28 14h1.2v1.2h-1.2zM-6 14h1.2v1.2h-1.2zM2 14h1.2v1.2h-1.2zM17 14h2.2v1.2h-2.2zM-34 15h1.2v1.2h-1.2zM-28 15h1.2v1.2h-1.2zM-17 15h1.2v1.2h-1.2zM-13 15h1.2v1.2h-1.2zM-11 15h1.2v1.2h-1.2zM-9 15h1.2v1.2h-1.2zM-2 15h2.2v1.2h-2.2zM2 15h1.2v1.2h-1.2zM6 15h1.2v1.2h-1.2zM-5 16h1.2v1.2h-1.2zM-1 16h1.2v1.2h-1.2zM6 16h2.2v1.2h-2.2zM28 16h1.2v1.2h-1.2zM39 16h1.2v1.2h-1.2zM42 16h1.2v1.2h-1.2zM-30 17h1.2v1.2h-1.2zM-1 17h2.2v1.2h-2.2zM15 17h1.2v1.2h-1.2zM20 17h1.2v1.2h-1.2zM-44 18h1.2v1.2h-1.2zM-30 18h1.2v1.2h-1.2zM18 18h1.2v1.2h-1.2zM-25 19h1.2v1.2h-1.2zM-37 20h1.2v1.2h-1.2zM-7 20h1.2v1.2h-1.2zM-5 20h1.2v1.2h-1.2zM11 20h1.2v1.2h-1.2zM45 20h1.2v1.2h-1.2zM-11 21h1.2v1.2h-1.2zM7 21h1.2v1.2h-1.2zM-17 22h1.2v1.2h-1.2zM-12 22h1.2v1.2h-1.2zM-7 22h1.2v1.2h-1.2zM-3 22h1.2v1.2h-1.2zM-45 23h1.2v1.2h-1.2zM41 23h1.2v1.2h-1.2zM-43 24h1.2v1.2h-1.2zM-29 24h1.2v1.2h-1.2zM38 24h1.2v1.2h-1.2zM41 24h1.2v1.2h-1.2zM44 24h1.2v1.2h-1.2zM-17 25h1.2v1.2h-1.2zM-3 25h1.2v1.2h-1.2zM0 25h1.2v1.2h-1.2zM-14 26h1.2v1.2h-1.2zM1 26h1.2v1.2h-1.2zM6 26h1.2v1.2h-1.2zM-39 27h2.2v1.2h-2.2zM15 28h1.2v1.2h-1.2zM31 28h1.2v1.2h-1.2zM42 28h1.2v1.2h-1.2zM-27 29h1.2v1.2h-1.2zM3 29h1.2v1.2h-1.2zM31 29h1.2v1.2h-1.2zM35 30h1.2v1.2h-1.2zM-34 31h1.2v1.2h-1.2zM7 31h1.2v1.2h-1.2zM29 31h1.2v1.2h-1.2zM24 32h1.2v1.2h-1.2zM32 32h1.2v1.2h-1.2zM-39 33h1.2v1.2h-1.2zM-22 33h1.2v1.2h-1.2zM30 33h1.2v1.2h-1.2zM34 33h1.2v1.2h-1.2zM26 34h1.2v1.2h-1.2zM28 34h1.2v1.2h-1.2zM33 34h1.2v1.2h-1.2zM38 35h1.2v1.2h-1.2zM26 36h1.2v1.2h-1.2zM-4 37h1.2v1.2h-1.2zM-33 38h1.2v1.2h-1.2zM-25 38h1.2v1.2h-1.2zM25 38h2.2v1.2h-2.2zM-16 39h1.2v1.2h-1.2zM-2 39h1.2v1.2h-1.2zM31 39h1.2v1.2h-1.2zM-34 40h1.2v1.2h-1.2zM8 40h1.2v1.2h-1.2zM23 40h1.2v1.2h-1.2zM32 41h1.2v1.2h-1.2zM-18 42h1.2v1.2h-1.2zM7 42h1.2v1.2h-1.2zM-29 43h1.2v1.2h-1.2zM-27 43h1.2v1.2h-1.2zM-16 43h1.2v1.2h-1.2zM5 43h1.2v1.2h-1.2zM8 43h1.2v1.2h-1.2zM11 43h1.2v1.2h-1.2zM-26 44h1.2v1.2h-1.2zM-23 44h1.2v1.2h-1.2zM-19 44h1.2v1.2h-1.2zM-9 44h1.2v1.2h-1.2zM17 44h1.2v1.2h-1.2zM-25 45h1.2v1.2h-1.2zM-23 45h1.2v1.2h-1.2zM-14 45h1.2v1.2h-1.2zM19 45h1.2v1.2h-1.2zM-22 46h1.2v1.2h-1.2zM-3 46h1.2v1.2h-1.2zM9 46h2.2v1.2h-2.2zM-19 48h1.2v1.2h-1.2zM8 50h1.2v1.2h-1.2zM11 50h1.2v1.2h-1.2z" fill="#fa1208"/></svg></div>
<div class="wc" style="left:1162.6px;top:482.4px"><svg class="wf" width="112" height="107.8" viewBox="-56 -56 112 112" preserveAspectRatio="none"><circle r="53" fill="#03fa03"/><path d="M-5.5 -53h10.7v1.2h-10.7zM-11.2 -52h23v1.2h-23zM-15 -51.1h30.6v1.2h-30.6zM-17.9 -50.1h24v1.2h-24zM6.8 -50.1h11.6v1.2h-11.6zM-20.7 -49.2h9.7v1.2h-9.7zM-10.2 -49.2h2.1v1.2h-2.1zM-7.4 -49.2h5v1.2h-5zM3 -49.2h5.9v1.2h-5.9zM9.7 -49.2h2.1v1.2h-2.1zM12.6 -49.2h7.8v1.2h-7.8zM-22.6 -48.2h12.6v1.2h-12.6zM9.7 -48.2h4v1.2h-4zM14.4 -48.2h1.2v1.2h-1.2zM16.4 -48.2h5.9v1.2h-5.9zM-24.5 -47.3h5.9v1.2h-5.9zM-15 -47.3h1.2v1.2h-1.2zM-8.3 -47.3h2.1v1.2h-2.1zM-4.5 -47.3h1.2v1.2h-1.2zM3 -47.3h1.2v1.2h-1.2zM8.8 -47.3h1.2v1.2h-1.2zM13.5 -47.3h10.7v1.2h-10.7zM-26.4 -46.4h6.9v1.2h-6.9zM-17.9 -46.4h1.2v1.2h-1.2zM-1.7 -46.4h1.2v1.2h-1.2zM3 -46.4h2.1v1.2h-2.1zM16.4 -46.4h3.1v1.2h-3.1zM20.1 -46.4h5.9v1.2h-5.9zM-27.4 -45.4h4v1.2h-4zM-22.6 -45.4h2.1v1.2h-2.1zM-19.8 -45.4h2.1v1.2h-2.1zM19.2 -45.4h2.1v1.2h-2.1zM22.1 -45.4h5.9v1.2h-5.9zM-29.2 -44.5h7.8v1.2h-7.8zM12.6 -44.5h1.2v1.2h-1.2zM21.1 -44.5h8.8v1.2h-8.8zM-30.2 -43.5h4v1.2h-4zM-24.5 -43.5h2.1v1.2h-2.1zM-2.6 -43.5h1.2v1.2h-1.2zM8.8 -43.5h1.2v1.2h-1.2zM23 -43.5h2.1v1.2h-2.1zM26.8 -43.5h4v1.2h-4zM-32.1 -42.5h4v1.2h-4zM-27.4 -42.5h2.1v1.2h-2.1zM-4.5 -42.5h1.2v1.2h-1.2zM16.4 -42.5h1.2v1.2h-1.2zM26.8 -42.5h5v1.2h-5zM-33 -41.6h4v1.2h-4zM-25.4 -41.6h1.2v1.2h-1.2zM-21.6 -41.6h1.2v1.2h-1.2zM-19.8 -41.6h1.2v1.2h-1.2zM-3.6 -41.6h1.2v1.2h-1.2zM29.6 -41.6h4v1.2h-4zM-34 -40.6h6.9v1.2h-6.9zM-5.5 -40.6h1.2v1.2h-1.2zM16.4 -40.6h1.2v1.2h-1.2zM29.6 -40.6h5v1.2h-5zM-35 -39.7h3.1v1.2h-3.1zM-31.1 -39.7h2.1v1.2h-2.1zM-16.9 -39.7h1.2v1.2h-1.2zM9.7 -39.7h1.2v1.2h-1.2zM29.6 -39.7h1.2v1.2h-1.2zM31.6 -39.7h4v1.2h-4zM-35 -38.8h5v1.2h-5zM-19.8 -38.8h1.2v1.2h-1.2zM-14.1 -38.8h2.1v1.2h-2.1zM-8.3 -38.8h1.2v1.2h-1.2zM20.1 -38.8h1.2v1.2h-1.2zM24.9 -38.8h1.2v1.2h-1.2zM27.8 -38.8h1.2v1.2h-1.2zM32.5 -38.8h4v1.2h-4zM-37.8 -37.8h6.9v1.2h-6.9zM-5.5 -37.8h1.2v1.2h-1.2zM-.8 -37.8h1.2v1.2h-1.2zM26.8 -37.8h1.2v1.2h-1.2zM32.5 -37.8h5v1.2h-5zM-36.9 -36.9h5v1.2h-5zM-16.9 -36.9h1.2v1.2h-1.2zM-14.1 -36.9h1.2v1.2h-1.2zM-12.2 -36.9h1.2v1.2h-1.2zM33.5 -36.9h5v1.2h-5zM-38.8 -35.9h5v1.2h-5zM-26.4 -35.9h1.2v1.2h-1.2zM-7.4 -35.9h1.2v1.2h-1.2zM-.8 -35.9h1.2v1.2h-1.2zM4 -35.9h1.2v1.2h-1.2zM6.8 -35.9h1.2v1.2h-1.2zM23.9 -35.9h1.2v1.2h-1.2zM29.6 -35.9h1.2v1.2h-1.2zM34.4 -35.9h5v1.2h-5zM-39.7 -35h4v1.2h-4zM-12.2 -35h1.2v1.2h-1.2zM-8.3 -35h1.2v1.2h-1.2zM5.9 -35h1.2v1.2h-1.2zM18.2 -35h1.2v1.2h-1.2zM37.2 -35h3.1v1.2h-3.1zM-40.6 -34h5v1.2h-5zM1.1 -34h1.2v1.2h-1.2zM36.3 -34h5v1.2h-5zM-41.6 -33h5.9v1.2h-5.9zM-21.6 -33h2.1v1.2h-2.1zM-15 -33h1.2v1.2h-1.2zM-8.3 -33h1.2v1.2h-1.2zM39.1 -33h3.1v1.2h-3.1zM-42.5 -32.1h3.1v1.2h-3.1zM-38.8 -32.1h1.2v1.2h-1.2zM-29.2 -32.1h1.2v1.2h-1.2zM-23.6 -32.1h1.2v1.2h-1.2zM-4.5 -32.1h1.2v1.2h-1.2zM-.8 -32.1h1.2v1.2h-1.2zM22.1 -32.1h1.2v1.2h-1.2zM33.5 -32.1h1.2v1.2h-1.2zM40.1 -32.1h2.1v1.2h-2.1zM-42.5 -31.1h4v1.2h-4zM-29.2 -31.1h1.2v1.2h-1.2zM-2.6 -31.1h1.2v1.2h-1.2zM8.8 -31.1h1.2v1.2h-1.2zM25.9 -31.1h1.2v1.2h-1.2zM39.1 -31.1h4v1.2h-4zM-43.5 -30.2h3.1v1.2h-3.1zM-39.7 -30.2h1.2v1.2h-1.2zM-9.3 -30.2h1.2v1.2h-1.2zM21.1 -30.2h1.2v1.2h-1.2zM41 -30.2h3.1v1.2h-3.1zM-44.5 -29.2h5v1.2h-5zM-35 -29.2h2.1v1.2h-2.1zM-31.1 -29.2h1.2v1.2h-1.2zM-28.3 -29.2h1.2v1.2h-1.2zM-20.7 -29.2h1.2v1.2h-1.2zM-13.1 -29.2h1.2v1.2h-1.2zM-11.2 -29.2h1.2v1.2h-1.2zM36.3 -29.2h1.2v1.2h-1.2zM42 -29.2h2.1v1.2h-2.1zM-44.5 -28.3h2.1v1.2h-2.1zM-41.6 -28.3h2.1v1.2h-2.1zM-1.7 -28.3h1.2v1.2h-1.2zM13.5 -28.3h1.2v1.2h-1.2zM27.8 -28.3h1.2v1.2h-1.2zM41 -28.3h4v1.2h-4zM-45.4 -27.4h4v1.2h-4zM-3.6 -27.4h1.2v1.2h-1.2zM30.6 -27.4h1.2v1.2h-1.2zM43 -27.4h3.1v1.2h-3.1zM-46.4 -26.4h5v1.2h-5zM-37.8 -26.4h1.2v1.2h-1.2zM-33 -26.4h1.2v1.2h-1.2zM17.3 -26.4h1.2v1.2h-1.2zM34.4 -26.4h1.2v1.2h-1.2zM43 -26.4h3.1v1.2h-3.1zM-46.4 -25.4h5v1.2h-5zM33.5 -25.4h1.2v1.2h-1.2zM43.9 -25.4h3.1v1.2h-3.1zM-47.3 -24.5h4v1.2h-4zM-34 -24.5h1.2v1.2h-1.2zM-30.2 -24.5h1.2v1.2h-1.2zM-27.4 -24.5h1.2v1.2h-1.2zM-16.9 -24.5h1.2v1.2h-1.2zM18.2 -24.5h1.2v1.2h-1.2zM34.4 -24.5h1.2v1.2h-1.2zM40.1 -24.5h1.2v1.2h-1.2zM44.9 -24.5h2.1v1.2h-2.1zM-47.3 -23.6h2.1v1.2h-2.1zM-44.5 -23.6h2.1v1.2h-2.1zM-34 -23.6h1.2v1.2h-1.2zM-10.2 -23.6h1.2v1.2h-1.2zM-7.4 -23.6h1.2v1.2h-1.2zM6.8 -23.6h1.2v1.2h-1.2zM22.1 -23.6h1.2v1.2h-1.2zM43.9 -23.6h4v1.2h-4zM-48.2 -22.6h5v1.2h-5zM-41.6 -22.6h1.2v1.2h-1.2zM-38.8 -22.6h1.2v1.2h-1.2zM-36.9 -22.6h1.2v1.2h-1.2zM-31.1 -22.6h1.2v1.2h-1.2zM-29.2 -22.6h1.2v1.2h-1.2zM-14.1 -22.6h1.2v1.2h-1.2zM23 -22.6h1.2v1.2h-1.2zM33.5 -22.6h1.2v1.2h-1.2zM45.8 -22.6h2.1v1.2h-2.1zM-48.2 -21.6h2.1v1.2h-2.1zM-31.1 -21.6h1.2v1.2h-1.2zM38.2 -21.6h1.2v1.2h-1.2zM41 -21.6h1.2v1.2h-1.2zM45.8 -21.6h3.1v1.2h-3.1zM-49.2 -20.7h3.1v1.2h-3.1zM-30.2 -20.7h1.2v1.2h-1.2zM-16.9 -20.7h1.2v1.2h-1.2zM-15 -20.7h1.2v1.2h-1.2zM9.7 -20.7h1.2v1.2h-1.2zM11.6 -20.7h1.2v1.2h-1.2zM13.5 -20.7h1.2v1.2h-1.2zM36.3 -20.7h2.1v1.2h-2.1zM39.1 -20.7h1.2v1.2h-1.2zM45.8 -20.7h3.1v1.2h-3.1zM-49.2 -19.8h4v1.2h-4zM-43.5 -19.8h1.2v1.2h-1.2zM-35 -19.8h1.2v1.2h-1.2zM-28.3 -19.8h1.2v1.2h-1.2zM-23.6 -19.8h1.2v1.2h-1.2zM-10.2 -19.8h2.1v1.2h-2.1zM2.1 -19.8h1.2v1.2h-1.2zM30.6 -19.8h1.2v1.2h-1.2zM45.8 -19.8h4v1.2h-4zM-49.2 -18.8h2.1v1.2h-2.1zM-43.5 -18.8h1.2v1.2h-1.2zM-30.2 -18.8h1.2v1.2h-1.2zM-28.3 -18.8h1.2v1.2h-1.2zM-24.5 -18.8h1.2v1.2h-1.2zM-4.5 -18.8h1.2v1.2h-1.2zM4 -18.8h1.2v1.2h-1.2zM25.9 -18.8h1.2v1.2h-1.2zM43.9 -18.8h1.2v1.2h-1.2zM47.7 -18.8h2.1v1.2h-2.1zM-50.1 -17.9h3.1v1.2h-3.1zM-40.6 -17.9h1.2v1.2h-1.2zM-38.8 -17.9h1.2v1.2h-1.2zM-26.4 -17.9h1.2v1.2h-1.2zM-24.5 -17.9h1.2v1.2h-1.2zM-17.9 -17.9h1.2v1.2h-1.2zM34.4 -17.9h1.2v1.2h-1.2zM46.8 -17.9h3.1v1.2h-3.1zM-50.1 -16.9h5v1.2h-5zM-40.6 -16.9h1.2v1.2h-1.2zM-32.1 -16.9h1.2v1.2h-1.2zM-19.8 -16.9h1.2v1.2h-1.2zM-15 -16.9h1.2v1.2h-1.2zM5 -16.9h1.2v1.2h-1.2zM27.8 -16.9h1.2v1.2h-1.2zM39.1 -16.9h1.2v1.2h-1.2zM46.8 -16.9h4v1.2h-4zM-50.1 -15.9h4v1.2h-4zM-35 -15.9h1.2v1.2h-1.2zM-18.8 -15.9h1.2v1.2h-1.2zM-16.9 -15.9h1.2v1.2h-1.2zM-12.2 -15.9h1.2v1.2h-1.2zM-10.2 -15.9h2.1v1.2h-2.1zM-6.5 -15.9h1.2v1.2h-1.2zM14.4 -15.9h1.2v1.2h-1.2zM31.6 -15.9h1.2v1.2h-1.2zM48.6 -15.9h2.1v1.2h-2.1zM-51.1 -15h5v1.2h-5zM-42.5 -15h1.2v1.2h-1.2zM-35.9 -15h1.2v1.2h-1.2zM-13.1 -15h1.2v1.2h-1.2zM10.7 -15h1.2v1.2h-1.2zM17.3 -15h1.2v1.2h-1.2zM23.9 -15h1.2v1.2h-1.2zM38.2 -15h1.2v1.2h-1.2zM47.7 -15h3.1v1.2h-3.1zM-51.1 -14.1h5v1.2h-5zM-44.5 -14.1h1.2v1.2h-1.2zM-35 -14.1h1.2v1.2h-1.2zM1.1 -14.1h2.1v1.2h-2.1zM23 -14.1h1.2v1.2h-1.2zM35.4 -14.1h1.2v1.2h-1.2zM48.6 -14.1h3.1v1.2h-3.1zM-51.1 -13.1h4v1.2h-4zM-23.6 -13.1h1.2v1.2h-1.2zM-15.9 -13.1h1.2v1.2h-1.2zM-6.5 -13.1h1.2v1.2h-1.2zM-.8 -13.1h1.2v1.2h-1.2zM27.8 -13.1h1.2v1.2h-1.2zM47.7 -13.1h4v1.2h-4zM-51.1 -12.2h1.2v1.2h-1.2zM-49.2 -12.2h1.2v1.2h-1.2zM-44.5 -12.2h1.2v1.2h-1.2zM-40.6 -12.2h1.2v1.2h-1.2zM-9.3 -12.2h1.2v1.2h-1.2zM-.8 -12.2h1.2v1.2h-1.2zM4 -12.2h1.2v1.2h-1.2zM27.8 -12.2h1.2v1.2h-1.2zM32.5 -12.2h2.1v1.2h-2.1zM36.3 -12.2h1.2v1.2h-1.2zM49.6 -12.2h2.1v1.2h-2.1zM-52 -11.2h5v1.2h-5zM-26.4 -11.2h1.2v1.2h-1.2zM-22.6 -11.2h1.2v1.2h-1.2zM11.6 -11.2h1.2v1.2h-1.2zM48.6 -11.2h3.1v1.2h-3.1zM-52 -10.2h5v1.2h-5zM-45.4 -10.2h1.2v1.2h-1.2zM-8.3 -10.2h1.2v1.2h-1.2zM-.8 -10.2h1.2v1.2h-1.2zM9.7 -10.2h1.2v1.2h-1.2zM22.1 -10.2h1.2v1.2h-1.2zM34.4 -10.2h1.2v1.2h-1.2zM41 -10.2h1.2v1.2h-1.2zM49.6 -10.2h2.1v1.2h-2.1zM-52 -9.3h5v1.2h-5zM-17.9 -9.3h1.2v1.2h-1.2zM12.6 -9.3h1.2v1.2h-1.2zM14.4 -9.3h2.1v1.2h-2.1zM43 -9.3h1.2v1.2h-1.2zM48.6 -9.3h4v1.2h-4zM-52 -8.3h4v1.2h-4zM-27.4 -8.3h1.2v1.2h-1.2zM5 -8.3h1.2v1.2h-1.2zM6.8 -8.3h1.2v1.2h-1.2zM13.5 -8.3h1.2v1.2h-1.2zM28.7 -8.3h1.2v1.2h-1.2zM30.6 -8.3h1.2v1.2h-1.2zM47.7 -8.3h5v1.2h-5zM-52 -7.4h4v1.2h-4zM-45.4 -7.4h1.2v1.2h-1.2zM-26.4 -7.4h1.2v1.2h-1.2zM-15 -7.4h1.2v1.2h-1.2zM-13.1 -7.4h1.2v1.2h-1.2zM9.7 -7.4h1.2v1.2h-1.2zM19.2 -7.4h1.2v1.2h-1.2zM23 -7.4h1.2v1.2h-1.2zM48.6 -7.4h4v1.2h-4zM-52 -6.5h4v1.2h-4zM-34 -6.5h1.2v1.2h-1.2zM-28.3 -6.5h1.2v1.2h-1.2zM50.5 -6.5h2.1v1.2h-2.1zM-53 -5.5h5v1.2h-5zM-41.6 -5.5h1.2v1.2h-1.2zM9.7 -5.5h1.2v1.2h-1.2zM19.2 -5.5h1.2v1.2h-1.2zM27.8 -5.5h1.2v1.2h-1.2zM50.5 -5.5h2.1v1.2h-2.1zM-53 -4.5h5v1.2h-5zM-43.5 -4.5h1.2v1.2h-1.2zM-7.4 -4.5h1.2v1.2h-1.2zM-5.5 -4.5h1.2v1.2h-1.2zM31.6 -4.5h1.2v1.2h-1.2zM48.6 -4.5h1.2v1.2h-1.2zM50.5 -4.5h2.1v1.2h-2.1zM-53 -3.6h5v1.2h-5zM-39.7 -3.6h1.2v1.2h-1.2zM-37.8 -3.6h1.2v1.2h-1.2zM-19.8 -3.6h1.2v1.2h-1.2zM12.6 -3.6h1.2v1.2h-1.2zM14.4 -3.6h1.2v1.2h-1.2zM19.2 -3.6h1.2v1.2h-1.2zM41 -3.6h1.2v1.2h-1.2zM43.9 -3.6h1.2v1.2h-1.2zM48.6 -3.6h4v1.2h-4zM-53 -2.6h5v1.2h-5zM-36.9 -2.6h1.2v1.2h-1.2zM-35 -2.6h1.2v1.2h-1.2zM-28.3 -2.6h1.2v1.2h-1.2zM-10.2 -2.6h1.2v1.2h-1.2zM1.1 -2.6h1.2v1.2h-1.2zM5.9 -2.6h1.2v1.2h-1.2zM13.5 -2.6h1.2v1.2h-1.2zM24.9 -2.6h1.2v1.2h-1.2zM49.6 -2.6h3.1v1.2h-3.1zM-53 -1.7h5v1.2h-5zM.2 -1.7h3.1v1.2h-3.1zM20.1 -1.7h1.2v1.2h-1.2zM23.9 -1.7h1.2v1.2h-1.2zM27.8 -1.7h1.2v1.2h-1.2zM29.6 -1.7h1.2v1.2h-1.2zM32.5 -1.7h1.2v1.2h-1.2zM50.5 -1.7h2.1v1.2h-2.1zM-53 -.8h2.1v1.2h-2.1zM-50.1 -.8h2.1v1.2h-2.1zM-42.5 -.8h1.2v1.2h-1.2zM-30.2 -.8h1.2v1.2h-1.2zM-10.2 -.8h1.2v1.2h-1.2zM12.6 -.8h1.2v1.2h-1.2zM50.5 -.8h2.1v1.2h-2.1zM-53 .2h5v1.2h-5zM-41.6 .2h1.2v1.2h-1.2zM-36.9 .2h1.2v1.2h-1.2zM-26.4 .2h1.2v1.2h-1.2zM5.9 .2h1.2v1.2h-1.2zM11.6 .2h1.2v1.2h-1.2zM13.5 .2h1.2v1.2h-1.2zM43 .2h1.2v1.2h-1.2zM44.9 .2h1.2v1.2h-1.2zM46.8 .2h2.1v1.2h-2.1zM50.5 .2h2.1v1.2h-2.1zM-53 1.1h5v1.2h-5zM-35 1.1h1.2v1.2h-1.2zM5 1.1h1.2v1.2h-1.2zM37.2 1.1h1.2v1.2h-1.2zM49.6 1.1h3.1v1.2h-3.1zM-53 2.1h5v1.2h-5zM-45.4 2.1h1.2v1.2h-1.2zM-15 2.1h1.2v1.2h-1.2zM-12.2 2.1h1.2v1.2h-1.2zM-7.4 2.1h1.2v1.2h-1.2zM-2.6 2.1h1.2v1.2h-1.2zM11.6 2.1h1.2v1.2h-1.2zM28.7 2.1h1.2v1.2h-1.2zM31.6 2.1h1.2v1.2h-1.2zM49.6 2.1h3.1v1.2h-3.1zM-53 3h5v1.2h-5zM-25.4 3h1.2v1.2h-1.2zM-17.9 3h1.2v1.2h-1.2zM1.1 3h1.2v1.2h-1.2zM23 3h1.2v1.2h-1.2zM37.2 3h1.2v1.2h-1.2zM41 3h1.2v1.2h-1.2zM50.5 3h2.1v1.2h-2.1zM-53 4h5v1.2h-5zM-40.6 4h1.2v1.2h-1.2zM-22.6 4h1.2v1.2h-1.2zM4 4h1.2v1.2h-1.2zM45.8 4h1.2v1.2h-1.2zM50.5 4h2.1v1.2h-2.1zM-52 5h4v1.2h-4zM-32.1 5h1.2v1.2h-1.2zM-22.6 5h1.2v1.2h-1.2zM-8.3 5h1.2v1.2h-1.2zM7.8 5h1.2v1.2h-1.2zM38.2 5h1.2v1.2h-1.2zM43 5h1.2v1.2h-1.2zM50.5 5h2.1v1.2h-2.1zM-52 5.9h4v1.2h-4zM-47.3 5.9h1.2v1.2h-1.2zM-38.8 5.9h1.2v1.2h-1.2zM-34 5.9h1.2v1.2h-1.2zM-27.4 5.9h1.2v1.2h-1.2zM50.5 5.9h2.1v1.2h-2.1zM-52 6.8h5v1.2h-5zM-46.4 6.8h1.2v1.2h-1.2zM-11.2 6.8h1.2v1.2h-1.2zM-6.5 6.8h1.2v1.2h-1.2zM.2 6.8h1.2v1.2h-1.2zM31.6 6.8h1.2v1.2h-1.2zM48.6 6.8h4v1.2h-4zM-52 7.8h6.9v1.2h-6.9zM-44.5 7.8h1.2v1.2h-1.2zM-39.7 7.8h1.2v1.2h-1.2zM-32.1 7.8h2.1v1.2h-2.1zM-21.6 7.8h1.2v1.2h-1.2zM-4.5 7.8h1.2v1.2h-1.2zM1.1 7.8h1.2v1.2h-1.2zM18.2 7.8h2.1v1.2h-2.1zM37.2 7.8h1.2v1.2h-1.2zM45.8 7.8h1.2v1.2h-1.2zM48.6 7.8h4v1.2h-4zM-52 8.8h5.9v1.2h-5.9zM-16.9 8.8h1.2v1.2h-1.2zM-15 8.8h1.2v1.2h-1.2zM15.4 8.8h1.2v1.2h-1.2zM32.5 8.8h1.2v1.2h-1.2zM37.2 8.8h1.2v1.2h-1.2zM49.6 8.8h3.1v1.2h-3.1zM-52 9.7h5v1.2h-5zM-46.4 9.7h2.1v1.2h-2.1zM-35 9.7h1.2v1.2h-1.2zM-27.4 9.7h1.2v1.2h-1.2zM-22.6 9.7h1.2v1.2h-1.2zM-20.7 9.7h2.1v1.2h-2.1zM-14.1 9.7h1.2v1.2h-1.2zM21.1 9.7h1.2v1.2h-1.2zM23.9 9.7h1.2v1.2h-1.2zM49.6 9.7h2.1v1.2h-2.1zM-52 10.7h7.8v1.2h-7.8zM-29.2 10.7h1.2v1.2h-1.2zM-9.3 10.7h1.2v1.2h-1.2zM3 10.7h1.2v1.2h-1.2zM39.1 10.7h1.2v1.2h-1.2zM43 10.7h1.2v1.2h-1.2zM48.6 10.7h3.1v1.2h-3.1zM-51.1 11.6h3.1v1.2h-3.1zM-47.3 11.6h1.2v1.2h-1.2zM-45.4 11.6h1.2v1.2h-1.2zM-43.5 11.6h1.2v1.2h-1.2zM-18.8 11.6h1.2v1.2h-1.2zM-.8 11.6h2.1v1.2h-2.1zM13.5 11.6h1.2v1.2h-1.2zM41 11.6h1.2v1.2h-1.2zM43.9 11.6h1.2v1.2h-1.2zM48.6 11.6h3.1v1.2h-3.1zM-51.1 12.6h6.9v1.2h-6.9zM-36.9 12.6h2.1v1.2h-2.1zM6.8 12.6h1.2v1.2h-1.2zM17.3 12.6h1.2v1.2h-1.2zM19.2 12.6h1.2v1.2h-1.2zM36.3 12.6h1.2v1.2h-1.2zM40.1 12.6h1.2v1.2h-1.2zM48.6 12.6h3.1v1.2h-3.1zM-51.1 13.5h3.1v1.2h-3.1zM-47.3 13.5h4v1.2h-4zM-39.7 13.5h1.2v1.2h-1.2zM-30.2 13.5h1.2v1.2h-1.2zM-27.4 13.5h1.2v1.2h-1.2zM-16.9 13.5h2.1v1.2h-2.1zM13.5 13.5h1.2v1.2h-1.2zM24.9 13.5h2.1v1.2h-2.1zM38.2 13.5h2.1v1.2h-2.1zM45.8 13.5h1.2v1.2h-1.2zM47.7 13.5h3.1v1.2h-3.1zM-51.1 14.4h3.1v1.2h-3.1zM-47.3 14.4h1.2v1.2h-1.2zM-45.4 14.4h2.1v1.2h-2.1zM-31.1 14.4h1.2v1.2h-1.2zM-.8 14.4h1.2v1.2h-1.2zM17.3 14.4h1.2v1.2h-1.2zM30.6 14.4h1.2v1.2h-1.2zM43 14.4h1.2v1.2h-1.2zM47.7 14.4h3.1v1.2h-3.1zM-50.1 15.4h1.2v1.2h-1.2zM-47.3 15.4h4v1.2h-4zM-34 15.4h1.2v1.2h-1.2zM-30.2 15.4h1.2v1.2h-1.2zM-19.8 15.4h1.2v1.2h-1.2zM-14.1 15.4h1.2v1.2h-1.2zM-6.5 15.4h1.2v1.2h-1.2zM24.9 15.4h1.2v1.2h-1.2zM30.6 15.4h1.2v1.2h-1.2zM47.7 15.4h3.1v1.2h-3.1zM-50.1 16.4h7.8v1.2h-7.8zM-29.2 16.4h1.2v1.2h-1.2zM-15.9 16.4h1.2v1.2h-1.2zM9.7 16.4h1.2v1.2h-1.2zM20.1 16.4h1.2v1.2h-1.2zM44.9 16.4h1.2v1.2h-1.2zM46.8 16.4h3.1v1.2h-3.1zM-50.1 17.3h7.8v1.2h-7.8zM-7.4 17.3h1.2v1.2h-1.2zM-1.7 17.3h1.2v1.2h-1.2zM18.2 17.3h1.2v1.2h-1.2zM34.4 17.3h1.2v1.2h-1.2zM39.1 17.3h1.2v1.2h-1.2zM47.7 17.3h2.1v1.2h-2.1zM-49.2 18.2h4v1.2h-4zM-44.5 18.2h3.1v1.2h-3.1zM-28.3 18.2h1.2v1.2h-1.2zM-5.5 18.2h1.2v1.2h-1.2zM23.9 18.2h1.2v1.2h-1.2zM29.6 18.2h1.2v1.2h-1.2zM35.4 18.2h1.2v1.2h-1.2zM42 18.2h1.2v1.2h-1.2zM45.8 18.2h4v1.2h-4zM-49.2 19.2h7.8v1.2h-7.8zM-21.6 19.2h1.2v1.2h-1.2zM-17.9 19.2h1.2v1.2h-1.2zM-15 19.2h1.2v1.2h-1.2zM13.5 19.2h1.2v1.2h-1.2zM15.4 19.2h1.2v1.2h-1.2zM26.8 19.2h1.2v1.2h-1.2zM45.8 19.2h3.1v1.2h-3.1zM-48.2 20.1h8.8v1.2h-8.8zM-35.9 20.1h1.2v1.2h-1.2zM-22.6 20.1h1.2v1.2h-1.2zM-3.6 20.1h1.2v1.2h-1.2zM8.8 20.1h1.2v1.2h-1.2zM23 20.1h1.2v1.2h-1.2zM45.8 20.1h3.1v1.2h-3.1zM-48.2 21.1h7.8v1.2h-7.8zM-35.9 21.1h1.2v1.2h-1.2zM-30.2 21.1h1.2v1.2h-1.2zM5.9 21.1h1.2v1.2h-1.2zM23 21.1h1.2v1.2h-1.2zM32.5 21.1h1.2v1.2h-1.2zM45.8 21.1h3.1v1.2h-3.1zM-47.3 22.1h7.8v1.2h-7.8zM34.4 22.1h1.2v1.2h-1.2zM44.9 22.1h3.1v1.2h-3.1zM-47.3 23h6.9v1.2h-6.9zM-23.6 23h1.2v1.2h-1.2zM22.1 23h1.2v1.2h-1.2zM23.9 23h1.2v1.2h-1.2zM35.4 23h1.2v1.2h-1.2zM41 23h1.2v1.2h-1.2zM43.9 23h4v1.2h-4zM-46.4 23.9h2.1v1.2h-2.1zM-43.5 23.9h5v1.2h-5zM-28.3 23.9h1.2v1.2h-1.2zM-22.6 23.9h1.2v1.2h-1.2zM43.9 23.9h1.2v1.2h-1.2zM45.8 23.9h1.2v1.2h-1.2zM-46.4 24.9h7.8v1.2h-7.8zM-37.8 24.9h1.2v1.2h-1.2zM-35 24.9h1.2v1.2h-1.2zM-33 24.9h1.2v1.2h-1.2zM12.6 24.9h1.2v1.2h-1.2zM43 24.9h3.1v1.2h-3.1zM-45.4 25.9h7.8v1.2h-7.8zM-31.1 25.9h1.2v1.2h-1.2zM18.2 25.9h1.2v1.2h-1.2zM20.1 25.9h1.2v1.2h-1.2zM43 25.9h3.1v1.2h-3.1zM-45.4 26.8h6.9v1.2h-6.9zM-36.9 26.8h1.2v1.2h-1.2zM-34 26.8h1.2v1.2h-1.2zM-22.6 26.8h1.2v1.2h-1.2zM6.8 26.8h1.2v1.2h-1.2zM11.6 26.8h1.2v1.2h-1.2zM17.3 26.8h1.2v1.2h-1.2zM23.9 26.8h1.2v1.2h-1.2zM41 26.8h4v1.2h-4zM-44.5 27.8h5v1.2h-5zM-21.6 27.8h1.2v1.2h-1.2zM19.2 27.8h1.2v1.2h-1.2zM42 27.8h3.1v1.2h-3.1zM-44.5 28.7h4v1.2h-4zM-39.7 28.7h1.2v1.2h-1.2zM-28.3 28.7h1.2v1.2h-1.2zM-8.3 28.7h1.2v1.2h-1.2zM-4.5 28.7h1.2v1.2h-1.2zM40.1 28.7h4v1.2h-4zM-43.5 29.6h5.9v1.2h-5.9zM-35.9 29.6h1.2v1.2h-1.2zM-14.1 29.6h1.2v1.2h-1.2zM-12.2 29.6h1.2v1.2h-1.2zM18.2 29.6h1.2v1.2h-1.2zM31.6 29.6h1.2v1.2h-1.2zM37.2 29.6h2.1v1.2h-2.1zM41 29.6h2.1v1.2h-2.1zM-42.5 30.6h5.9v1.2h-5.9zM-35.9 30.6h1.2v1.2h-1.2zM-34 30.6h1.2v1.2h-1.2zM-26.4 30.6h1.2v1.2h-1.2zM-19.8 30.6h1.2v1.2h-1.2zM-16.9 30.6h2.1v1.2h-2.1zM-9.3 30.6h1.2v1.2h-1.2zM-5.5 30.6h1.2v1.2h-1.2zM-.8 30.6h1.2v1.2h-1.2zM16.4 30.6h1.2v1.2h-1.2zM23 30.6h1.2v1.2h-1.2zM33.5 30.6h1.2v1.2h-1.2zM38.2 30.6h1.2v1.2h-1.2zM40.1 30.6h3.1v1.2h-3.1zM-41.6 31.6h5v1.2h-5zM-30.2 31.6h1.2v1.2h-1.2zM-4.5 31.6h1.2v1.2h-1.2zM34.4 31.6h1.2v1.2h-1.2zM38.2 31.6h4v1.2h-4zM-41.6 32.5h5.9v1.2h-5.9zM-30.2 32.5h1.2v1.2h-1.2zM27.8 32.5h1.2v1.2h-1.2zM38.2 32.5h3.1v1.2h-3.1zM-40.6 33.5h5.9v1.2h-5.9zM-24.5 33.5h1.2v1.2h-1.2zM2.1 33.5h1.2v1.2h-1.2zM20.1 33.5h1.2v1.2h-1.2zM25.9 33.5h1.2v1.2h-1.2zM27.8 33.5h1.2v1.2h-1.2zM37.2 33.5h3.1v1.2h-3.1zM-39.7 34.4h5v1.2h-5zM-31.1 34.4h1.2v1.2h-1.2zM-15 34.4h1.2v1.2h-1.2zM-9.3 34.4h1.2v1.2h-1.2zM-6.5 34.4h1.2v1.2h-1.2zM-.8 34.4h1.2v1.2h-1.2zM5.9 34.4h1.2v1.2h-1.2zM35.4 34.4h5v1.2h-5zM-38.8 35.4h5.9v1.2h-5.9zM-9.3 35.4h1.2v1.2h-1.2zM19.2 35.4h2.1v1.2h-2.1zM34.4 35.4h5v1.2h-5zM-37.8 36.3h6.9v1.2h-6.9zM34.4 36.3h4v1.2h-4zM-36.9 37.2h6.9v1.2h-6.9zM-19.8 37.2h1.2v1.2h-1.2zM-15 37.2h1.2v1.2h-1.2zM6.8 37.2h1.2v1.2h-1.2zM15.4 37.2h1.2v1.2h-1.2zM25.9 37.2h1.2v1.2h-1.2zM32.5 37.2h5v1.2h-5zM-35.9 38.2h6.9v1.2h-6.9zM-24.5 38.2h1.2v1.2h-1.2zM-12.2 38.2h1.2v1.2h-1.2zM-6.5 38.2h1.2v1.2h-1.2zM2.1 38.2h1.2v1.2h-1.2zM8.8 38.2h1.2v1.2h-1.2zM12.6 38.2h2.1v1.2h-2.1zM32.5 38.2h4v1.2h-4zM-35 39.1h6.9v1.2h-6.9zM20.1 39.1h1.2v1.2h-1.2zM22.1 39.1h1.2v1.2h-1.2zM31.6 39.1h4v1.2h-4zM-34 40.1h5.9v1.2h-5.9zM-27.4 40.1h1.2v1.2h-1.2zM-25.4 40.1h1.2v1.2h-1.2zM-19.8 40.1h1.2v1.2h-1.2zM8.8 40.1h1.2v1.2h-1.2zM17.3 40.1h1.2v1.2h-1.2zM28.7 40.1h1.2v1.2h-1.2zM30.6 40.1h3.1v1.2h-3.1zM-33 41h5.9v1.2h-5.9zM-18.8 41h1.2v1.2h-1.2zM-7.4 41h1.2v1.2h-1.2zM-2.6 41h1.2v1.2h-1.2zM5.9 41h2.1v1.2h-2.1zM9.7 41h2.1v1.2h-2.1zM26.8 41h1.2v1.2h-1.2zM28.7 41h4v1.2h-4zM-31.1 42h5.9v1.2h-5.9zM-16.9 42h1.2v1.2h-1.2zM19.2 42h1.2v1.2h-1.2zM27.8 42h2.1v1.2h-2.1zM30.6 42h1.2v1.2h-1.2zM-30.2 43h5v1.2h-5zM-24.5 43h1.2v1.2h-1.2zM-19.8 43h2.1v1.2h-2.1zM-10.2 43h1.2v1.2h-1.2zM-1.7 43h1.2v1.2h-1.2zM5 43h1.2v1.2h-1.2zM11.6 43h1.2v1.2h-1.2zM13.5 43h1.2v1.2h-1.2zM23.9 43h1.2v1.2h-1.2zM25.9 43h4v1.2h-4zM-28.3 43.9h4v1.2h-4zM-23.6 43.9h1.2v1.2h-1.2zM23.9 43.9h5v1.2h-5zM-27.4 44.9h5v1.2h-5zM-21.6 44.9h2.1v1.2h-2.1zM-9.3 44.9h1.2v1.2h-1.2zM-7.4 44.9h1.2v1.2h-1.2zM11.6 44.9h1.2v1.2h-1.2zM20.1 44.9h2.1v1.2h-2.1zM23 44.9h4v1.2h-4zM-25.4 45.8h5v1.2h-5zM-19.8 45.8h1.2v1.2h-1.2zM-12.2 45.8h1.2v1.2h-1.2zM16.4 45.8h1.2v1.2h-1.2zM20.1 45.8h5.9v1.2h-5.9zM-23.6 46.8h5v1.2h-5zM-16.9 46.8h2.1v1.2h-2.1zM14.4 46.8h1.2v1.2h-1.2zM16.4 46.8h1.2v1.2h-1.2zM18.2 46.8h5.9v1.2h-5.9zM-21.6 47.7h9.7v1.2h-9.7zM2.1 47.7h1.2v1.2h-1.2zM8.8 47.7h1.2v1.2h-1.2zM12.6 47.7h1.2v1.2h-1.2zM14.4 47.7h7.8v1.2h-7.8zM-19.8 48.6h7.8v1.2h-7.8zM-10.2 48.6h1.2v1.2h-1.2zM4 48.6h1.2v1.2h-1.2zM7.8 48.6h2.1v1.2h-2.1zM10.7 48.6h8.8v1.2h-8.8zM-16.9 49.6h10.7v1.2h-10.7zM-5.5 49.6h1.2v1.2h-1.2zM-3.6 49.6h1.2v1.2h-1.2zM1.1 49.6h1.2v1.2h-1.2zM3 49.6h2.1v1.2h-2.1zM5.9 49.6h10.7v1.2h-10.7zM-14.1 50.5h4v1.2h-4zM-9.3 50.5h23v1.2h-23zM-9.3 51.5h8.8v1.2h-8.8zM.2 51.5h9.7v1.2h-9.7z" fill="#fa1208"/></svg></div>
<div class="wc" style="left:576.2px;top:632.4px"><svg class="wf" width="112" height="107.8" viewBox="-56 -56 112 112" preserveAspectRatio="none"><circle r="53" fill="#03fa03"/><path d="M-7.1 -53h1.6v1.6h-1.6zM-4.4 -53h1.6v1.6h-1.6zM-1.7 -53h4.3v1.6h-4.3zM5 -53h1.6v1.6h-1.6zM-12.5 -51.6h2.9v1.6h-2.9zM-8.4 -51.6h1.6v1.6h-1.6zM-4.4 -51.6h4.3v1.6h-4.3zM3.7 -51.6h7v1.6h-7zM11.8 -51.6h1.6v1.6h-1.6zM-17.9 -50.3h7v1.6h-7zM7.8 -50.3h1.6v1.6h-1.6zM10.4 -50.3h7v1.6h-7zM-19.2 -49h1.6v1.6h-1.6zM-16.6 -49h4.3v1.6h-4.3zM-9.8 -49h2.9v1.6h-2.9zM-4.4 -49h1.6v1.6h-1.6zM-1.7 -49h1.6v1.6h-1.6zM3.7 -49h2.9v1.6h-2.9zM9.1 -49h1.6v1.6h-1.6zM11.8 -49h1.6v1.6h-1.6zM15.8 -49h4.3v1.6h-4.3zM-24.6 -47.6h5.6v1.6h-5.6zM-17.9 -47.6h1.6v1.6h-1.6zM-11.2 -47.6h2.9v1.6h-2.9zM-7.1 -47.6h1.6v1.6h-1.6zM-4.4 -47.6h2.9v1.6h-2.9zM2.4 -47.6h1.6v1.6h-1.6zM7.8 -47.6h4.3v1.6h-4.3zM13.2 -47.6h1.6v1.6h-1.6zM15.8 -47.6h1.6v1.6h-1.6zM18.6 -47.6h5.6v1.6h-5.6zM-26 -46.2h1.6v1.6h-1.6zM-23.3 -46.2h1.6v1.6h-1.6zM-20.6 -46.2h1.6v1.6h-1.6zM-12.5 -46.2h4.3v1.6h-4.3zM11.8 -46.2h1.6v1.6h-1.6zM14.5 -46.2h1.6v1.6h-1.6zM17.2 -46.2h1.6v1.6h-1.6zM23.9 -46.2h1.6v1.6h-1.6zM-27.4 -44.9h1.6v1.6h-1.6zM-20.6 -44.9h1.6v1.6h-1.6zM-17.9 -44.9h2.9v1.6h-2.9zM-11.2 -44.9h2.9v1.6h-2.9zM11.8 -44.9h1.6v1.6h-1.6zM15.8 -44.9h2.9v1.6h-2.9zM21.2 -44.9h1.6v1.6h-1.6zM23.9 -44.9h2.9v1.6h-2.9zM28 -44.9h1.6v1.6h-1.6zM-31.4 -43.5h2.9v1.6h-2.9zM-26 -43.5h1.6v1.6h-1.6zM-21.9 -43.5h1.6v1.6h-1.6zM-19.2 -43.5h2.9v1.6h-2.9zM-15.2 -43.5h1.6v1.6h-1.6zM-9.8 -43.5h1.6v1.6h-1.6zM-.3 -43.5h1.6v1.6h-1.6zM10.4 -43.5h1.6v1.6h-1.6zM14.5 -43.5h7v1.6h-7zM23.9 -43.5h4.3v1.6h-4.3zM-31.4 -42.2h2.9v1.6h-2.9zM-27.4 -42.2h1.6v1.6h-1.6zM-24.6 -42.2h4.3v1.6h-4.3zM-13.8 -42.2h2.9v1.6h-2.9zM-9.8 -42.2h1.6v1.6h-1.6zM-7.1 -42.2h1.6v1.6h-1.6zM5 -42.2h1.6v1.6h-1.6zM11.8 -42.2h1.6v1.6h-1.6zM15.8 -42.2h5.6v1.6h-5.6zM22.6 -42.2h1.6v1.6h-1.6zM28 -42.2h4.3v1.6h-4.3zM-34.1 -40.9h1.6v1.6h-1.6zM-31.4 -40.9h1.6v1.6h-1.6zM-28.7 -40.9h4.3v1.6h-4.3zM-11.2 -40.9h1.6v1.6h-1.6zM1 -40.9h1.6v1.6h-1.6zM9.1 -40.9h5.6v1.6h-5.6zM15.8 -40.9h1.6v1.6h-1.6zM18.6 -40.9h1.6v1.6h-1.6zM22.6 -40.9h1.6v1.6h-1.6zM26.6 -40.9h1.6v1.6h-1.6zM32 -40.9h2.9v1.6h-2.9zM-32.8 -39.5h1.6v1.6h-1.6zM-27.4 -39.5h1.6v1.6h-1.6zM-23.3 -39.5h1.6v1.6h-1.6zM-17.9 -39.5h1.6v1.6h-1.6zM-11.2 -39.5h1.6v1.6h-1.6zM-8.4 -39.5h1.6v1.6h-1.6zM-5.8 -39.5h1.6v1.6h-1.6zM-1.7 -39.5h1.6v1.6h-1.6zM7.8 -39.5h2.9v1.6h-2.9zM11.8 -39.5h5.6v1.6h-5.6zM18.6 -39.5h1.6v1.6h-1.6zM21.2 -39.5h1.6v1.6h-1.6zM25.3 -39.5h1.6v1.6h-1.6zM28 -39.5h1.6v1.6h-1.6zM30.7 -39.5h1.6v1.6h-1.6zM-36.8 -38.1h2.9v1.6h-2.9zM-32.8 -38.1h5.6v1.6h-5.6zM-15.2 -38.1h1.6v1.6h-1.6zM-11.2 -38.1h1.6v1.6h-1.6zM13.2 -38.1h2.9v1.6h-2.9zM17.2 -38.1h1.6v1.6h-1.6zM28 -38.1h1.6v1.6h-1.6zM30.7 -38.1h1.6v1.6h-1.6zM33.4 -38.1h1.6v1.6h-1.6zM36.1 -38.1h1.6v1.6h-1.6zM-35.5 -36.8h1.6v1.6h-1.6zM-30.1 -36.8h1.6v1.6h-1.6zM-27.4 -36.8h1.6v1.6h-1.6zM-12.5 -36.8h8.3v1.6h-8.3zM3.7 -36.8h1.6v1.6h-1.6zM10.4 -36.8h4.3v1.6h-4.3zM15.8 -36.8h4.3v1.6h-4.3zM32 -36.8h5.6v1.6h-5.6zM-39.5 -35.5h1.6v1.6h-1.6zM-30.1 -35.5h2.9v1.6h-2.9zM-26 -35.5h5.6v1.6h-5.6zM-19.2 -35.5h1.6v1.6h-1.6zM-15.2 -35.5h1.6v1.6h-1.6zM-9.8 -35.5h2.9v1.6h-2.9zM9.1 -35.5h1.6v1.6h-1.6zM14.5 -35.5h4.3v1.6h-4.3zM19.9 -35.5h1.6v1.6h-1.6zM26.6 -35.5h1.6v1.6h-1.6zM30.7 -35.5h9.7v1.6h-9.7zM-34.1 -34.1h1.6v1.6h-1.6zM-27.4 -34.1h2.9v1.6h-2.9zM-23.3 -34.1h2.9v1.6h-2.9zM-8.4 -34.1h1.6v1.6h-1.6zM-.3 -34.1h1.6v1.6h-1.6zM9.1 -34.1h1.6v1.6h-1.6zM13.2 -34.1h1.6v1.6h-1.6zM15.8 -34.1h2.9v1.6h-2.9zM29.4 -34.1h1.6v1.6h-1.6zM37.5 -34.1h2.9v1.6h-2.9zM-42.2 -32.8h1.6v1.6h-1.6zM-39.5 -32.8h5.6v1.6h-5.6zM-31.4 -32.8h5.6v1.6h-5.6zM-9.8 -32.8h2.9v1.6h-2.9zM2.4 -32.8h1.6v1.6h-1.6zM9.1 -32.8h9.7v1.6h-9.7zM29.4 -32.8h1.6v1.6h-1.6zM33.4 -32.8h1.6v1.6h-1.6zM37.5 -32.8h1.6v1.6h-1.6zM-42.2 -31.4h2.9v1.6h-2.9zM-38.1 -31.4h2.9v1.6h-2.9zM-32.8 -31.4h1.6v1.6h-1.6zM-28.7 -31.4h1.6v1.6h-1.6zM-26 -31.4h1.6v1.6h-1.6zM-23.3 -31.4h2.9v1.6h-2.9zM-13.8 -31.4h1.6v1.6h-1.6zM-11.2 -31.4h1.6v1.6h-1.6zM-7.1 -31.4h1.6v1.6h-1.6zM7.8 -31.4h8.3v1.6h-8.3zM29.4 -31.4h1.6v1.6h-1.6zM36.1 -31.4h1.6v1.6h-1.6zM38.8 -31.4h4.3v1.6h-4.3zM-43.5 -30.1h2.9v1.6h-2.9zM-39.5 -30.1h4.3v1.6h-4.3zM-21.9 -30.1h1.6v1.6h-1.6zM-13.8 -30.1h1.6v1.6h-1.6zM-9.8 -30.1h4.3v1.6h-4.3zM9.1 -30.1h1.6v1.6h-1.6zM13.2 -30.1h1.6v1.6h-1.6zM15.8 -30.1h1.6v1.6h-1.6zM36.1 -30.1h4.3v1.6h-4.3zM-44.9 -28.7h1.6v1.6h-1.6zM-42.2 -28.7h1.6v1.6h-1.6zM-39.5 -28.7h4.3v1.6h-4.3zM-24.6 -28.7h1.6v1.6h-1.6zM-21.9 -28.7h2.9v1.6h-2.9zM-8.4 -28.7h1.6v1.6h-1.6zM7.8 -28.7h5.6v1.6h-5.6zM14.5 -28.7h1.6v1.6h-1.6zM21.2 -28.7h1.6v1.6h-1.6zM36.1 -28.7h1.6v1.6h-1.6zM38.8 -28.7h1.6v1.6h-1.6zM42.9 -28.7h1.6v1.6h-1.6zM-40.9 -27.4h8.3v1.6h-8.3zM-23.3 -27.4h2.9v1.6h-2.9zM-9.8 -27.4h1.6v1.6h-1.6zM-7.1 -27.4h1.6v1.6h-1.6zM-4.4 -27.4h1.6v1.6h-1.6zM6.4 -27.4h2.9v1.6h-2.9zM11.8 -27.4h1.6v1.6h-1.6zM37.5 -27.4h1.6v1.6h-1.6zM40.1 -27.4h1.6v1.6h-1.6zM42.9 -27.4h1.6v1.6h-1.6zM-46.2 -26h5.6v1.6h-5.6zM-38.1 -26h1.6v1.6h-1.6zM-34.1 -26h1.6v1.6h-1.6zM-26 -26h1.6v1.6h-1.6zM-23.3 -26h1.6v1.6h-1.6zM-20.6 -26h4.3v1.6h-4.3zM-8.4 -26h1.6v1.6h-1.6zM-4.4 -26h1.6v1.6h-1.6zM9.1 -26h4.3v1.6h-4.3zM33.4 -26h1.6v1.6h-1.6zM40.1 -26h1.6v1.6h-1.6zM44.2 -26h2.9v1.6h-2.9zM-47.6 -24.6h2.9v1.6h-2.9zM-43.5 -24.6h9.7v1.6h-9.7zM-16.6 -24.6h1.6v1.6h-1.6zM-11.2 -24.6h1.6v1.6h-1.6zM-8.4 -24.6h1.6v1.6h-1.6zM6.4 -24.6h2.9v1.6h-2.9zM10.4 -24.6h2.9v1.6h-2.9zM19.9 -24.6h1.6v1.6h-1.6zM22.6 -24.6h1.6v1.6h-1.6zM30.7 -24.6h1.6v1.6h-1.6zM36.1 -24.6h1.6v1.6h-1.6zM42.9 -24.6h4.3v1.6h-4.3zM-47.6 -23.3h4.3v1.6h-4.3zM-40.9 -23.3h2.9v1.6h-2.9zM-36.8 -23.3h11v1.6h-11zM-19.2 -23.3h4.3v1.6h-4.3zM-5.8 -23.3h1.6v1.6h-1.6zM6.4 -23.3h1.6v1.6h-1.6zM9.1 -23.3h1.6v1.6h-1.6zM11.8 -23.3h2.9v1.6h-2.9zM26.6 -23.3h1.6v1.6h-1.6zM44.2 -23.3h1.6v1.6h-1.6zM46.9 -23.3h1.6v1.6h-1.6zM-49 -21.9h1.6v1.6h-1.6zM-46.2 -21.9h2.9v1.6h-2.9zM-42.2 -21.9h1.6v1.6h-1.6zM-39.5 -21.9h1.6v1.6h-1.6zM-36.8 -21.9h1.6v1.6h-1.6zM-34.1 -21.9h2.9v1.6h-2.9zM-17.9 -21.9h2.9v1.6h-2.9zM-9.8 -21.9h1.6v1.6h-1.6zM-7.1 -21.9h1.6v1.6h-1.6zM-4.4 -21.9h1.6v1.6h-1.6zM-1.7 -21.9h2.9v1.6h-2.9zM6.4 -21.9h4.3v1.6h-4.3zM23.9 -21.9h1.6v1.6h-1.6zM41.5 -21.9h1.6v1.6h-1.6zM46.9 -21.9h1.6v1.6h-1.6zM-46.2 -20.6h1.6v1.6h-1.6zM-43.5 -20.6h2.9v1.6h-2.9zM-39.5 -20.6h13.7v1.6h-13.7zM-21.9 -20.6h1.6v1.6h-1.6zM-17.9 -20.6h2.9v1.6h-2.9zM6.4 -20.6h5.6v1.6h-5.6zM22.6 -20.6h1.6v1.6h-1.6zM37.5 -20.6h1.6v1.6h-1.6zM42.9 -20.6h5.6v1.6h-5.6zM-49 -19.2h1.6v1.6h-1.6zM-46.2 -19.2h1.6v1.6h-1.6zM-43.5 -19.2h8.3v1.6h-8.3zM-34.1 -19.2h7v1.6h-7zM-16.6 -19.2h1.6v1.6h-1.6zM6.4 -19.2h4.3v1.6h-4.3zM21.2 -19.2h1.6v1.6h-1.6zM23.9 -19.2h1.6v1.6h-1.6zM30.7 -19.2h1.6v1.6h-1.6zM45.5 -19.2h2.9v1.6h-2.9zM-50.3 -17.9h1.6v1.6h-1.6zM-47.6 -17.9h2.9v1.6h-2.9zM-43.5 -17.9h5.6v1.6h-5.6zM-36.8 -17.9h2.9v1.6h-2.9zM-32.8 -17.9h4.3v1.6h-4.3zM-27.4 -17.9h7v1.6h-7zM-15.2 -17.9h2.9v1.6h-2.9zM-5.8 -17.9h2.9v1.6h-2.9zM3.7 -17.9h4.3v1.6h-4.3zM9.1 -17.9h1.6v1.6h-1.6zM26.6 -17.9h2.9v1.6h-2.9zM36.1 -17.9h1.6v1.6h-1.6zM46.9 -17.9h2.9v1.6h-2.9zM-50.3 -16.6h5.6v1.6h-5.6zM-40.9 -16.6h4.3v1.6h-4.3zM-31.4 -16.6h1.6v1.6h-1.6zM-28.7 -16.6h1.6v1.6h-1.6zM-26 -16.6h1.6v1.6h-1.6zM-23.3 -16.6h1.6v1.6h-1.6zM-20.6 -16.6h1.6v1.6h-1.6zM-13.8 -16.6h2.9v1.6h-2.9zM-4.4 -16.6h1.6v1.6h-1.6zM3.7 -16.6h5.6v1.6h-5.6zM45.5 -16.6h1.6v1.6h-1.6zM48.2 -16.6h2.9v1.6h-2.9zM-50.3 -15.2h1.6v1.6h-1.6zM-47.6 -15.2h2.9v1.6h-2.9zM-42.2 -15.2h5.6v1.6h-5.6zM-34.1 -15.2h1.6v1.6h-1.6zM-31.4 -15.2h1.6v1.6h-1.6zM-27.4 -15.2h5.6v1.6h-5.6zM-19.2 -15.2h1.6v1.6h-1.6zM-12.5 -15.2h1.6v1.6h-1.6zM-3 -15.2h1.6v1.6h-1.6zM5 -15.2h1.6v1.6h-1.6zM14.5 -15.2h1.6v1.6h-1.6zM22.6 -15.2h1.6v1.6h-1.6zM26.6 -15.2h1.6v1.6h-1.6zM44.2 -15.2h1.6v1.6h-1.6zM46.9 -15.2h2.9v1.6h-2.9zM-51.6 -13.8h2.9v1.6h-2.9zM-46.2 -13.8h1.6v1.6h-1.6zM-43.5 -13.8h12.4v1.6h-12.4zM-30.1 -13.8h7v1.6h-7zM-20.6 -13.8h2.9v1.6h-2.9zM-12.5 -13.8h5.6v1.6h-5.6zM-4.4 -13.8h2.9v1.6h-2.9zM3.7 -13.8h4.3v1.6h-4.3zM13.2 -13.8h1.6v1.6h-1.6zM18.6 -13.8h1.6v1.6h-1.6zM25.3 -13.8h1.6v1.6h-1.6zM46.9 -13.8h4.3v1.6h-4.3zM-51.6 -12.5h2.9v1.6h-2.9zM-44.9 -12.5h1.6v1.6h-1.6zM-42.2 -12.5h7v1.6h-7zM-34.1 -12.5h1.6v1.6h-1.6zM-31.4 -12.5h1.6v1.6h-1.6zM-28.7 -12.5h4.3v1.6h-4.3zM-21.9 -12.5h1.6v1.6h-1.6zM-17.9 -12.5h1.6v1.6h-1.6zM-11.2 -12.5h1.6v1.6h-1.6zM-8.4 -12.5h1.6v1.6h-1.6zM1 -12.5h1.6v1.6h-1.6zM3.7 -12.5h2.9v1.6h-2.9zM38.8 -12.5h1.6v1.6h-1.6zM45.5 -12.5h2.9v1.6h-2.9zM49.6 -12.5h1.6v1.6h-1.6zM-51.6 -11.2h5.6v1.6h-5.6zM-42.2 -11.2h1.6v1.6h-1.6zM-38.1 -11.2h1.6v1.6h-1.6zM-35.5 -11.2h7v1.6h-7zM-27.4 -11.2h5.6v1.6h-5.6zM-20.6 -11.2h1.6v1.6h-1.6zM-15.2 -11.2h2.9v1.6h-2.9zM-9.8 -11.2h1.6v1.6h-1.6zM-4.4 -11.2h2.9v1.6h-2.9zM2.4 -11.2h5.6v1.6h-5.6zM25.3 -11.2h1.6v1.6h-1.6zM49.6 -11.2h2.9v1.6h-2.9zM-47.6 -9.8h1.6v1.6h-1.6zM-40.9 -9.8h2.9v1.6h-2.9zM-36.8 -9.8h4.3v1.6h-4.3zM-31.4 -9.8h2.9v1.6h-2.9zM-26 -9.8h1.6v1.6h-1.6zM-23.3 -9.8h1.6v1.6h-1.6zM-20.6 -9.8h1.6v1.6h-1.6zM-17.9 -9.8h4.3v1.6h-4.3zM-7.1 -9.8h1.6v1.6h-1.6zM-3 -9.8h1.6v1.6h-1.6zM22.6 -9.8h1.6v1.6h-1.6zM46.9 -9.8h1.6v1.6h-1.6zM49.6 -9.8h2.9v1.6h-2.9zM-51.6 -8.4h2.9v1.6h-2.9zM-47.6 -8.4h1.6v1.6h-1.6zM-44.9 -8.4h1.6v1.6h-1.6zM-35.5 -8.4h4.3v1.6h-4.3zM-30.1 -8.4h1.6v1.6h-1.6zM-26 -8.4h2.9v1.6h-2.9zM-20.6 -8.4h4.3v1.6h-4.3zM-13.8 -8.4h4.3v1.6h-4.3zM-7.1 -8.4h1.6v1.6h-1.6zM-3 -8.4h1.6v1.6h-1.6zM2.4 -8.4h2.9v1.6h-2.9zM32 -8.4h2.9v1.6h-2.9zM48.2 -8.4h4.3v1.6h-4.3zM-53 -7.1h7v1.6h-7zM-44.9 -7.1h1.6v1.6h-1.6zM-28.7 -7.1h2.9v1.6h-2.9zM-21.9 -7.1h1.6v1.6h-1.6zM-16.6 -7.1h1.6v1.6h-1.6zM-13.8 -7.1h4.3v1.6h-4.3zM-5.8 -7.1h1.6v1.6h-1.6zM-1.7 -7.1h1.6v1.6h-1.6zM2.4 -7.1h1.6v1.6h-1.6zM46.9 -7.1h2.9v1.6h-2.9zM-53 -5.8h2.9v1.6h-2.9zM-47.6 -5.8h1.6v1.6h-1.6zM-40.9 -5.8h1.6v1.6h-1.6zM-38.1 -5.8h2.9v1.6h-2.9zM-31.4 -5.8h1.6v1.6h-1.6zM-26 -5.8h1.6v1.6h-1.6zM-21.9 -5.8h1.6v1.6h-1.6zM-16.6 -5.8h1.6v1.6h-1.6zM-13.8 -5.8h7v1.6h-7zM-1.7 -5.8h1.6v1.6h-1.6zM6.4 -5.8h1.6v1.6h-1.6zM23.9 -5.8h1.6v1.6h-1.6zM46.9 -5.8h1.6v1.6h-1.6zM49.6 -5.8h1.6v1.6h-1.6zM-50.3 -4.4h2.9v1.6h-2.9zM-43.5 -4.4h1.6v1.6h-1.6zM-39.5 -4.4h1.6v1.6h-1.6zM-31.4 -4.4h1.6v1.6h-1.6zM-15.2 -4.4h11v1.6h-11zM-3 -4.4h1.6v1.6h-1.6zM29.4 -4.4h1.6v1.6h-1.6zM33.4 -4.4h2.9v1.6h-2.9zM49.6 -4.4h1.6v1.6h-1.6zM-53 -3h4.3v1.6h-4.3zM-47.6 -3h1.6v1.6h-1.6zM-21.9 -3h1.6v1.6h-1.6zM-9.8 -3h1.6v1.6h-1.6zM-7.1 -3h4.3v1.6h-4.3zM-.3 -3h1.6v1.6h-1.6zM30.7 -3h1.6v1.6h-1.6zM36.1 -3h1.6v1.6h-1.6zM38.8 -3h1.6v1.6h-1.6zM46.9 -3h1.6v1.6h-1.6zM49.6 -3h1.6v1.6h-1.6zM-53 -1.7h2.9v1.6h-2.9zM-47.6 -1.7h1.6v1.6h-1.6zM-39.5 -1.7h1.6v1.6h-1.6zM-11.2 -1.7h1.6v1.6h-1.6zM-3 -1.7h1.6v1.6h-1.6zM11.8 -1.7h1.6v1.6h-1.6zM46.9 -1.7h1.6v1.6h-1.6zM49.6 -1.7h2.9v1.6h-2.9zM-53 -.3h1.6v1.6h-1.6zM-47.6 -.3h1.6v1.6h-1.6zM-40.9 -.3h1.6v1.6h-1.6zM-38.1 -.3h1.6v1.6h-1.6zM-24.6 -.3h1.6v1.6h-1.6zM-3 -.3h5.6v1.6h-5.6zM5 -.3h1.6v1.6h-1.6zM45.5 -.3h4.3v1.6h-4.3zM-53 1h4.3v1.6h-4.3zM-47.6 1h1.6v1.6h-1.6zM-38.1 1h1.6v1.6h-1.6zM-24.6 1h1.6v1.6h-1.6zM-5.8 1h1.6v1.6h-1.6zM-1.7 1h1.6v1.6h-1.6zM1 1h4.3v1.6h-4.3zM13.2 1h1.6v1.6h-1.6zM41.5 1h1.6v1.6h-1.6zM51 1h1.6v1.6h-1.6zM-53 2.4h1.6v1.6h-1.6zM-49 2.4h1.6v1.6h-1.6zM-35.5 2.4h1.6v1.6h-1.6zM-26 2.4h1.6v1.6h-1.6zM-23.3 2.4h1.6v1.6h-1.6zM-11.2 2.4h2.9v1.6h-2.9zM-3 2.4h1.6v1.6h-1.6zM3.7 2.4h7v1.6h-7zM44.2 2.4h1.6v1.6h-1.6zM49.6 2.4h1.6v1.6h-1.6zM-53 3.7h2.9v1.6h-2.9zM-49 3.7h1.6v1.6h-1.6zM-13.8 3.7h2.9v1.6h-2.9zM-3 3.7h1.6v1.6h-1.6zM9.1 3.7h5.6v1.6h-5.6zM30.7 3.7h2.9v1.6h-2.9zM42.9 3.7h1.6v1.6h-1.6zM46.9 3.7h5.6v1.6h-5.6zM-53 5h2.9v1.6h-2.9zM-17.9 5h1.6v1.6h-1.6zM-13.8 5h1.6v1.6h-1.6zM-4.4 5h1.6v1.6h-1.6zM7.8 5h4.3v1.6h-4.3zM13.2 5h1.6v1.6h-1.6zM19.9 5h1.6v1.6h-1.6zM25.3 5h1.6v1.6h-1.6zM29.4 5h1.6v1.6h-1.6zM45.5 5h4.3v1.6h-4.3zM51 5h1.6v1.6h-1.6zM-51.6 6.4h1.6v1.6h-1.6zM-49 6.4h1.6v1.6h-1.6zM-32.8 6.4h1.6v1.6h-1.6zM-21.9 6.4h1.6v1.6h-1.6zM-16.6 6.4h1.6v1.6h-1.6zM-4.4 6.4h1.6v1.6h-1.6zM9.1 6.4h1.6v1.6h-1.6zM13.2 6.4h9.7v1.6h-9.7zM25.3 6.4h1.6v1.6h-1.6zM40.1 6.4h1.6v1.6h-1.6zM46.9 6.4h4.3v1.6h-4.3zM-51.6 7.8h4.3v1.6h-4.3zM-40.9 7.8h1.6v1.6h-1.6zM-26 7.8h1.6v1.6h-1.6zM-21.9 7.8h1.6v1.6h-1.6zM-7.1 7.8h1.6v1.6h-1.6zM-4.4 7.8h1.6v1.6h-1.6zM-1.7 7.8h1.6v1.6h-1.6zM5 7.8h1.6v1.6h-1.6zM11.8 7.8h4.3v1.6h-4.3zM17.2 7.8h1.6v1.6h-1.6zM19.9 7.8h5.6v1.6h-5.6zM26.6 7.8h1.6v1.6h-1.6zM38.8 7.8h1.6v1.6h-1.6zM46.9 7.8h1.6v1.6h-1.6zM-49 9.1h1.6v1.6h-1.6zM-46.2 9.1h1.6v1.6h-1.6zM-34.1 9.1h1.6v1.6h-1.6zM-27.4 9.1h1.6v1.6h-1.6zM-24.6 9.1h1.6v1.6h-1.6zM-12.5 9.1h1.6v1.6h-1.6zM-8.4 9.1h4.3v1.6h-4.3zM2.4 9.1h4.3v1.6h-4.3zM13.2 9.1h4.3v1.6h-4.3zM18.6 9.1h1.6v1.6h-1.6zM22.6 9.1h1.6v1.6h-1.6zM25.3 9.1h5.6v1.6h-5.6zM34.8 9.1h1.6v1.6h-1.6zM37.5 9.1h1.6v1.6h-1.6zM45.5 9.1h1.6v1.6h-1.6zM49.6 9.1h2.9v1.6h-2.9zM-51.6 10.4h7v1.6h-7zM-34.1 10.4h1.6v1.6h-1.6zM-31.4 10.4h5.6v1.6h-5.6zM-15.2 10.4h1.6v1.6h-1.6zM-12.5 10.4h1.6v1.6h-1.6zM-9.8 10.4h1.6v1.6h-1.6zM-7.1 10.4h2.9v1.6h-2.9zM18.6 10.4h4.3v1.6h-4.3zM25.3 10.4h1.6v1.6h-1.6zM33.4 10.4h4.3v1.6h-4.3zM45.5 10.4h5.6v1.6h-5.6zM-51.6 11.8h4.3v1.6h-4.3zM-40.9 11.8h1.6v1.6h-1.6zM-36.8 11.8h5.6v1.6h-5.6zM-17.9 11.8h1.6v1.6h-1.6zM-11.2 11.8h1.6v1.6h-1.6zM-8.4 11.8h2.9v1.6h-2.9zM1 11.8h1.6v1.6h-1.6zM7.8 11.8h1.6v1.6h-1.6zM18.6 11.8h1.6v1.6h-1.6zM21.2 11.8h2.9v1.6h-2.9zM26.6 11.8h4.3v1.6h-4.3zM32 11.8h8.3v1.6h-8.3zM41.5 11.8h1.6v1.6h-1.6zM46.9 11.8h4.3v1.6h-4.3zM-43.5 13.2h2.9v1.6h-2.9zM-36.8 13.2h1.6v1.6h-1.6zM-24.6 13.2h1.6v1.6h-1.6zM-15.2 13.2h1.6v1.6h-1.6zM-11.2 13.2h7v1.6h-7zM9.1 13.2h1.6v1.6h-1.6zM18.6 13.2h2.9v1.6h-2.9zM22.6 13.2h2.9v1.6h-2.9zM26.6 13.2h1.6v1.6h-1.6zM29.4 13.2h2.9v1.6h-2.9zM33.4 13.2h2.9v1.6h-2.9zM37.5 13.2h5.6v1.6h-5.6zM44.2 13.2h1.6v1.6h-1.6zM48.2 13.2h1.6v1.6h-1.6zM-50.3 14.5h2.9v1.6h-2.9zM-46.2 14.5h1.6v1.6h-1.6zM-32.8 14.5h1.6v1.6h-1.6zM-24.6 14.5h1.6v1.6h-1.6zM-21.9 14.5h1.6v1.6h-1.6zM-12.5 14.5h1.6v1.6h-1.6zM-5.8 14.5h1.6v1.6h-1.6zM10.4 14.5h1.6v1.6h-1.6zM19.9 14.5h1.6v1.6h-1.6zM22.6 14.5h1.6v1.6h-1.6zM25.3 14.5h1.6v1.6h-1.6zM28 14.5h2.9v1.6h-2.9zM32 14.5h8.3v1.6h-8.3zM41.5 14.5h1.6v1.6h-1.6zM45.5 14.5h1.6v1.6h-1.6zM48.2 14.5h2.9v1.6h-2.9zM-50.3 15.8h2.9v1.6h-2.9zM-44.9 15.8h2.9v1.6h-2.9zM-27.4 15.8h1.6v1.6h-1.6zM-12.5 15.8h1.6v1.6h-1.6zM-9.8 15.8h1.6v1.6h-1.6zM-7.1 15.8h1.6v1.6h-1.6zM19.9 15.8h1.6v1.6h-1.6zM22.6 15.8h2.9v1.6h-2.9zM29.4 15.8h4.3v1.6h-4.3zM34.8 15.8h5.6v1.6h-5.6zM41.5 15.8h2.9v1.6h-2.9zM46.9 15.8h2.9v1.6h-2.9zM-50.3 17.2h5.6v1.6h-5.6zM-13.8 17.2h4.3v1.6h-4.3zM-8.4 17.2h1.6v1.6h-1.6zM1 17.2h1.6v1.6h-1.6zM23.9 17.2h8.3v1.6h-8.3zM34.8 17.2h2.9v1.6h-2.9zM38.8 17.2h8.3v1.6h-8.3zM-47.6 18.6h1.6v1.6h-1.6zM-43.5 18.6h1.6v1.6h-1.6zM-31.4 18.6h1.6v1.6h-1.6zM-16.6 18.6h1.6v1.6h-1.6zM-13.8 18.6h1.6v1.6h-1.6zM-11.2 18.6h4.3v1.6h-4.3zM21.2 18.6h1.6v1.6h-1.6zM25.3 18.6h4.3v1.6h-4.3zM30.7 18.6h2.9v1.6h-2.9zM36.1 18.6h1.6v1.6h-1.6zM40.1 18.6h2.9v1.6h-2.9zM44.2 18.6h2.9v1.6h-2.9zM48.2 18.6h1.6v1.6h-1.6zM-49 19.9h2.9v1.6h-2.9zM-44.9 19.9h2.9v1.6h-2.9zM-36.8 19.9h1.6v1.6h-1.6zM-17.9 19.9h1.6v1.6h-1.6zM-15.2 19.9h1.6v1.6h-1.6zM-12.5 19.9h2.9v1.6h-2.9zM10.4 19.9h1.6v1.6h-1.6zM15.8 19.9h1.6v1.6h-1.6zM26.6 19.9h4.3v1.6h-4.3zM33.4 19.9h1.6v1.6h-1.6zM36.1 19.9h5.6v1.6h-5.6zM44.2 19.9h4.3v1.6h-4.3zM-47.6 21.2h1.6v1.6h-1.6zM-42.2 21.2h1.6v1.6h-1.6zM-38.1 21.2h2.9v1.6h-2.9zM-30.1 21.2h1.6v1.6h-1.6zM-19.2 21.2h1.6v1.6h-1.6zM-16.6 21.2h4.3v1.6h-4.3zM-4.4 21.2h1.6v1.6h-1.6zM-.3 21.2h1.6v1.6h-1.6zM14.5 21.2h1.6v1.6h-1.6zM30.7 21.2h4.3v1.6h-4.3zM37.5 21.2h11v1.6h-11zM-47.6 22.6h1.6v1.6h-1.6zM-42.2 22.6h1.6v1.6h-1.6zM-35.5 22.6h1.6v1.6h-1.6zM-30.1 22.6h1.6v1.6h-1.6zM-19.2 22.6h1.6v1.6h-1.6zM-16.6 22.6h2.9v1.6h-2.9zM-11.2 22.6h1.6v1.6h-1.6zM-4.4 22.6h1.6v1.6h-1.6zM-1.7 22.6h1.6v1.6h-1.6zM13.2 22.6h2.9v1.6h-2.9zM25.3 22.6h1.6v1.6h-1.6zM28 22.6h1.6v1.6h-1.6zM30.7 22.6h2.9v1.6h-2.9zM36.1 22.6h2.9v1.6h-2.9zM40.1 22.6h2.9v1.6h-2.9zM44.2 22.6h2.9v1.6h-2.9zM-46.2 23.9h1.6v1.6h-1.6zM-43.5 23.9h4.3v1.6h-4.3zM-34.1 23.9h1.6v1.6h-1.6zM-23.3 23.9h1.6v1.6h-1.6zM-20.6 23.9h1.6v1.6h-1.6zM-17.9 23.9h1.6v1.6h-1.6zM-15.2 23.9h2.9v1.6h-2.9zM-9.8 23.9h1.6v1.6h-1.6zM14.5 23.9h2.9v1.6h-2.9zM23.9 23.9h2.9v1.6h-2.9zM37.5 23.9h5.6v1.6h-5.6zM44.2 23.9h2.9v1.6h-2.9zM-46.2 25.3h1.6v1.6h-1.6zM-42.2 25.3h4.3v1.6h-4.3zM-28.7 25.3h1.6v1.6h-1.6zM-26 25.3h1.6v1.6h-1.6zM-23.3 25.3h1.6v1.6h-1.6zM-20.6 25.3h2.9v1.6h-2.9zM-16.6 25.3h1.6v1.6h-1.6zM17.2 25.3h1.6v1.6h-1.6zM29.4 25.3h1.6v1.6h-1.6zM37.5 25.3h4.3v1.6h-4.3zM42.9 25.3h2.9v1.6h-2.9zM-44.9 26.6h2.9v1.6h-2.9zM-39.5 26.6h1.6v1.6h-1.6zM-23.3 26.6h1.6v1.6h-1.6zM-20.6 26.6h2.9v1.6h-2.9zM-16.6 26.6h1.6v1.6h-1.6zM-12.5 26.6h1.6v1.6h-1.6zM13.2 26.6h1.6v1.6h-1.6zM15.8 26.6h2.9v1.6h-2.9zM29.4 26.6h1.6v1.6h-1.6zM36.1 26.6h4.3v1.6h-4.3zM41.5 26.6h4.3v1.6h-4.3zM-44.9 28h2.9v1.6h-2.9zM-40.9 28h2.9v1.6h-2.9zM-24.6 28h1.6v1.6h-1.6zM-21.9 28h1.6v1.6h-1.6zM-19.2 28h9.7v1.6h-9.7zM-1.7 28h1.6v1.6h-1.6zM11.8 28h1.6v1.6h-1.6zM38.8 28h4.3v1.6h-4.3zM-43.5 29.4h1.6v1.6h-1.6zM-40.9 29.4h4.3v1.6h-4.3zM-26 29.4h1.6v1.6h-1.6zM-21.9 29.4h1.6v1.6h-1.6zM-15.2 29.4h2.9v1.6h-2.9zM-8.4 29.4h1.6v1.6h-1.6zM13.2 29.4h1.6v1.6h-1.6zM15.8 29.4h2.9v1.6h-2.9zM30.7 29.4h1.6v1.6h-1.6zM36.1 29.4h1.6v1.6h-1.6zM40.1 29.4h2.9v1.6h-2.9zM-42.2 30.7h1.6v1.6h-1.6zM-36.8 30.7h2.9v1.6h-2.9zM-32.8 30.7h1.6v1.6h-1.6zM-28.7 30.7h1.6v1.6h-1.6zM-24.6 30.7h1.6v1.6h-1.6zM-21.9 30.7h2.9v1.6h-2.9zM-16.6 30.7h4.3v1.6h-4.3zM-7.1 30.7h1.6v1.6h-1.6zM3.7 30.7h1.6v1.6h-1.6zM14.5 30.7h1.6v1.6h-1.6zM19.9 30.7h1.6v1.6h-1.6zM32 30.7h1.6v1.6h-1.6zM34.8 30.7h1.6v1.6h-1.6zM38.8 30.7h1.6v1.6h-1.6zM-40.9 32h2.9v1.6h-2.9zM-36.8 32h1.6v1.6h-1.6zM-30.1 32h8.3v1.6h-8.3zM-20.6 32h2.9v1.6h-2.9zM-16.6 32h1.6v1.6h-1.6zM-1.7 32h1.6v1.6h-1.6zM5 32h1.6v1.6h-1.6zM18.6 32h2.9v1.6h-2.9zM34.8 32h1.6v1.6h-1.6zM37.5 32h2.9v1.6h-2.9zM-39.5 33.4h1.6v1.6h-1.6zM-36.8 33.4h4.3v1.6h-4.3zM-31.4 33.4h2.9v1.6h-2.9zM-27.4 33.4h1.6v1.6h-1.6zM-24.6 33.4h1.6v1.6h-1.6zM-21.9 33.4h8.3v1.6h-8.3zM-12.5 33.4h1.6v1.6h-1.6zM2.4 33.4h1.6v1.6h-1.6zM32 33.4h1.6v1.6h-1.6zM37.5 33.4h1.6v1.6h-1.6zM-39.5 34.8h1.6v1.6h-1.6zM-35.5 34.8h13.7v1.6h-13.7zM-20.6 34.8h2.9v1.6h-2.9zM-15.2 34.8h1.6v1.6h-1.6zM-7.1 34.8h1.6v1.6h-1.6zM-.3 34.8h1.6v1.6h-1.6zM6.4 34.8h1.6v1.6h-1.6zM15.8 34.8h1.6v1.6h-1.6zM21.2 34.8h2.9v1.6h-2.9zM33.4 34.8h1.6v1.6h-1.6zM36.1 34.8h2.9v1.6h-2.9zM-36.8 36.1h1.6v1.6h-1.6zM-34.1 36.1h4.3v1.6h-4.3zM-28.7 36.1h4.3v1.6h-4.3zM-23.3 36.1h5.6v1.6h-5.6zM-15.2 36.1h1.6v1.6h-1.6zM-.3 36.1h1.6v1.6h-1.6zM25.3 36.1h1.6v1.6h-1.6zM28 36.1h1.6v1.6h-1.6zM30.7 36.1h2.9v1.6h-2.9zM36.1 36.1h1.6v1.6h-1.6zM-34.1 37.5h1.6v1.6h-1.6zM-30.1 37.5h4.3v1.6h-4.3zM-21.9 37.5h2.9v1.6h-2.9zM-17.9 37.5h5.6v1.6h-5.6zM2.4 37.5h1.6v1.6h-1.6zM9.1 37.5h1.6v1.6h-1.6zM22.6 37.5h4.3v1.6h-4.3zM28 37.5h4.3v1.6h-4.3zM33.4 37.5h1.6v1.6h-1.6zM-34.1 38.8h1.6v1.6h-1.6zM-31.4 38.8h9.7v1.6h-9.7zM-20.6 38.8h4.3v1.6h-4.3zM-9.8 38.8h1.6v1.6h-1.6zM5 38.8h1.6v1.6h-1.6zM14.5 38.8h1.6v1.6h-1.6zM23.9 38.8h1.6v1.6h-1.6zM26.6 38.8h4.3v1.6h-4.3zM32 38.8h2.9v1.6h-2.9zM-32.8 40.1h9.7v1.6h-9.7zM-21.9 40.1h2.9v1.6h-2.9zM-4.4 40.1h1.6v1.6h-1.6zM3.7 40.1h1.6v1.6h-1.6zM15.8 40.1h1.6v1.6h-1.6zM23.9 40.1h2.9v1.6h-2.9zM29.4 40.1h4.3v1.6h-4.3zM-30.1 41.5h2.9v1.6h-2.9zM-26 41.5h2.9v1.6h-2.9zM-12.5 41.5h1.6v1.6h-1.6zM-8.4 41.5h1.6v1.6h-1.6zM7.8 41.5h1.6v1.6h-1.6zM19.9 41.5h1.6v1.6h-1.6zM28 41.5h4.3v1.6h-4.3zM-30.1 42.9h2.9v1.6h-2.9zM-26 42.9h2.9v1.6h-2.9zM-21.9 42.9h1.6v1.6h-1.6zM-17.9 42.9h1.6v1.6h-1.6zM22.6 42.9h2.9v1.6h-2.9zM26.6 42.9h2.9v1.6h-2.9zM-27.4 44.2h11v1.6h-11zM-13.8 44.2h1.6v1.6h-1.6zM3.7 44.2h1.6v1.6h-1.6zM17.2 44.2h1.6v1.6h-1.6zM22.6 44.2h4.3v1.6h-4.3zM-26 45.5h2.9v1.6h-2.9zM-21.9 45.5h1.6v1.6h-1.6zM-17.9 45.5h1.6v1.6h-1.6zM-15.2 45.5h1.6v1.6h-1.6zM-12.5 45.5h2.9v1.6h-2.9zM-8.4 45.5h2.9v1.6h-2.9zM5 45.5h5.6v1.6h-5.6zM11.8 45.5h7v1.6h-7zM21.2 45.5h2.9v1.6h-2.9zM-20.6 46.9h4.3v1.6h-4.3zM-15.2 46.9h1.6v1.6h-1.6zM-8.4 46.9h4.3v1.6h-4.3zM-.3 46.9h2.9v1.6h-2.9zM5 46.9h2.9v1.6h-2.9zM9.1 46.9h2.9v1.6h-2.9zM18.6 46.9h2.9v1.6h-2.9zM-12.5 48.2h2.9v1.6h-2.9zM-7.1 48.2h4.3v1.6h-4.3zM-1.7 48.2h2.9v1.6h-2.9zM3.7 48.2h1.6v1.6h-1.6zM6.4 48.2h5.6v1.6h-5.6zM13.2 48.2h4.3v1.6h-4.3zM18.6 48.2h1.6v1.6h-1.6zM-16.6 49.6h2.9v1.6h-2.9zM-12.5 49.6h1.6v1.6h-1.6zM-9.8 49.6h1.6v1.6h-1.6zM-5.8 49.6h7v1.6h-7zM3.7 49.6h1.6v1.6h-1.6zM6.4 49.6h1.6v1.6h-1.6zM10.4 49.6h5.6v1.6h-5.6zM-11.2 51h1.6v1.6h-1.6zM-7.1 51h1.6v1.6h-1.6zM-3 51h1.6v1.6h-1.6zM-.3 51h1.6v1.6h-1.6zM5 51h4.3v1.6h-4.3z" fill="#fa1208"/></svg></div>
<div class="wc" style="left:722.8px;top:632.4px"><svg class="wf" width="112" height="107.8" viewBox="-56 -56 112 112" preserveAspectRatio="none"><circle r="53" fill="#03fa03"/><path d="M10 -51.5h1.7v1.7h-1.7zM-18.5 -50h1.7v1.7h-1.7zM-11 -50h1.7v1.7h-1.7zM10 -50h1.7v1.7h-1.7zM-9.5 -48.5h1.7v1.7h-1.7zM5.5 -48.5h1.7v1.7h-1.7zM8.5 -48.5h3.2v1.7h-3.2zM8.5 -47h1.7v1.7h-1.7zM-.5 -45.5h1.7v1.7h-1.7zM7 -45.5h3.2v1.7h-3.2zM16 -45.5h1.7v1.7h-1.7zM1 -44h1.7v1.7h-1.7zM7 -44h1.7v1.7h-1.7zM5.5 -42.5h3.2v1.7h-3.2zM13 -42.5h1.7v1.7h-1.7zM23.5 -42.5h1.7v1.7h-1.7zM-2 -41h1.7v1.7h-1.7zM5.5 -41h1.7v1.7h-1.7zM16 -41h1.7v1.7h-1.7zM-26 -39.5h1.7v1.7h-1.7zM4 -39.5h1.7v1.7h-1.7zM31 -39.5h1.7v1.7h-1.7zM4 -38h1.7v1.7h-1.7zM-23 -36.5h1.7v1.7h-1.7zM2.5 -36.5h1.7v1.7h-1.7zM29.5 -36.5h1.7v1.7h-1.7zM-9.5 -35h1.7v1.7h-1.7zM-2 -35h3.2v1.7h-3.2zM2.5 -35h1.7v1.7h-1.7zM-32 -33.5h1.7v1.7h-1.7zM-21.5 -33.5h1.7v1.7h-1.7zM-15.5 -33.5h1.7v1.7h-1.7zM1 -33.5h1.7v1.7h-1.7zM-26 -32h1.7v1.7h-1.7zM-.5 -32h3.2v1.7h-3.2zM25 -32h1.7v1.7h-1.7zM-.5 -30.5h1.7v1.7h-1.7zM17.5 -30.5h1.7v1.7h-1.7zM-2 -29h3.2v1.7h-3.2zM-44 -27.5h1.7v1.7h-1.7zM-15.5 -27.5h1.7v1.7h-1.7zM-18.5 -26h1.7v1.7h-1.7zM-3.5 -26h3.2v1.7h-3.2zM-23 -24.5h1.7v1.7h-1.7zM-8 -24.5h1.7v1.7h-1.7zM-3.5 -24.5h1.7v1.7h-1.7zM-5 -23h3.2v1.7h-3.2zM43 -23h1.7v1.7h-1.7zM-17 -21.5h1.7v1.7h-1.7zM-11 -21.5h1.7v1.7h-1.7zM-5 -21.5h1.7v1.7h-1.7zM2.5 -21.5h1.7v1.7h-1.7zM8.5 -21.5h1.7v1.7h-1.7zM-11 -20h1.7v1.7h-1.7zM-6.5 -20h3.2v1.7h-3.2zM16 -20h1.7v1.7h-1.7zM43 -20h1.7v1.7h-1.7zM-6.5 -18.5h3.2v1.7h-3.2zM32.5 -18.5h1.7v1.7h-1.7zM-33.5 -17h1.7v1.7h-1.7zM-8 -17h1.7v1.7h-1.7zM19 -17h1.7v1.7h-1.7zM-8 -15.5h1.7v1.7h-1.7zM-17 -14h1.7v1.7h-1.7zM-9.5 -14h3.2v1.7h-3.2zM-41 -12.5h1.7v1.7h-1.7zM-9.5 -12.5h1.7v1.7h-1.7zM-29 -11h3.2v1.7h-3.2zM-11 -11h3.2v1.7h-3.2zM46 -11h1.7v1.7h-1.7zM-45.5 -9.5h1.7v1.7h-1.7zM-11 -9.5h1.7v1.7h-1.7zM14.5 -9.5h1.7v1.7h-1.7zM-41 -8h1.7v1.7h-1.7zM-14 -8h4.7v1.7h-4.7zM-8 -8h1.7v1.7h-1.7zM44.5 -8h1.7v1.7h-1.7zM50.5 -8h1.7v1.7h-1.7zM-12.5 -6.5h1.7v1.7h-1.7zM-8 -6.5h3.2v1.7h-3.2zM-14 -5h3.2v1.7h-3.2zM-45.5 -3.5h1.7v1.7h-1.7zM-14 -3.5h3.2v1.7h-3.2zM19 -3.5h1.7v1.7h-1.7zM22 -3.5h1.7v1.7h-1.7zM-27.5 -2h1.7v1.7h-1.7zM-18.5 -2h1.7v1.7h-1.7zM-15.5 -2h3.2v1.7h-3.2zM-15.5 -.5h1.7v1.7h-1.7zM11.5 -.5h1.7v1.7h-1.7zM35.5 -.5h1.7v1.7h-1.7zM-17 1h1.7v1.7h-1.7zM-20 2.5h1.7v1.7h-1.7zM-20 4h1.7v1.7h-1.7zM-8 4h1.7v1.7h-1.7zM26.5 4h1.7v1.7h-1.7zM41.5 4h1.7v1.7h-1.7zM-44 5.5h1.7v1.7h-1.7zM-33.5 5.5h1.7v1.7h-1.7zM-26 5.5h1.7v1.7h-1.7zM46 5.5h1.7v1.7h-1.7zM-47 7h1.7v1.7h-1.7zM-44 7h1.7v1.7h-1.7zM-35 7h1.7v1.7h-1.7zM-29 7h1.7v1.7h-1.7zM10 7h1.7v1.7h-1.7zM20.5 8.5h1.7v1.7h-1.7zM14.5 11.5h1.7v1.7h-1.7zM46 11.5h1.7v1.7h-1.7zM50.5 11.5h1.7v1.7h-1.7zM-48.5 13h1.7v1.7h-1.7zM-15.5 13h1.7v1.7h-1.7zM20.5 13h1.7v1.7h-1.7zM-42.5 14.5h1.7v1.7h-1.7zM-24.5 14.5h1.7v1.7h-1.7zM-17 14.5h1.7v1.7h-1.7zM29.5 14.5h3.2v1.7h-3.2zM-39.5 16h1.7v1.7h-1.7zM-30.5 16h1.7v1.7h-1.7zM-2 16h1.7v1.7h-1.7zM19 16h1.7v1.7h-1.7zM34 16h1.7v1.7h-1.7zM-30.5 17.5h1.7v1.7h-1.7zM-20 17.5h1.7v1.7h-1.7zM-9.5 17.5h1.7v1.7h-1.7zM-29 19h1.7v1.7h-1.7zM-20 19h1.7v1.7h-1.7zM4 19h1.7v1.7h-1.7zM34 19h1.7v1.7h-1.7zM-39.5 20.5h1.7v1.7h-1.7zM-36.5 20.5h1.7v1.7h-1.7zM-35 22h1.7v1.7h-1.7zM-45.5 23.5h1.7v1.7h-1.7zM22 23.5h1.7v1.7h-1.7zM-30.5 25h1.7v1.7h-1.7zM-27.5 25h1.7v1.7h-1.7zM10 25h1.7v1.7h-1.7zM-38 26.5h1.7v1.7h-1.7zM1 26.5h1.7v1.7h-1.7zM16 26.5h1.7v1.7h-1.7zM-38 29.5h3.2v1.7h-3.2zM17.5 29.5h1.7v1.7h-1.7zM31 29.5h1.7v1.7h-1.7zM-8 31h1.7v1.7h-1.7zM-27.5 32.5h1.7v1.7h-1.7zM-8 32.5h1.7v1.7h-1.7zM-2 32.5h1.7v1.7h-1.7zM7 32.5h1.7v1.7h-1.7zM20.5 32.5h1.7v1.7h-1.7zM25 32.5h1.7v1.7h-1.7zM-17 34h1.7v1.7h-1.7zM2.5 34h1.7v1.7h-1.7zM-18.5 35.5h1.7v1.7h-1.7zM13 35.5h1.7v1.7h-1.7zM-36.5 37h1.7v1.7h-1.7zM-33.5 37h1.7v1.7h-1.7zM-11 37h1.7v1.7h-1.7zM-33.5 38.5h1.7v1.7h-1.7zM5.5 38.5h1.7v1.7h-1.7zM10 38.5h1.7v1.7h-1.7zM20.5 46h1.7v1.7h-1.7zM-17 49h1.7v1.7h-1.7zM-.5 49h1.7v1.7h-1.7z" fill="#fa1208"/></svg></div>

<!-- texts -->
<div class="t" id="lgA" style="left:29px;top:7.6px;font-size:28px;color:#fff;font-weight:700;letter-spacing:0px;">A</div>
<div class="t" id="lgpx" style="left:50.5px;top:13.1px;font-size:21.5px;color:#fff;-webkit-text-stroke:.3px #fff;transform:scaleX(1.3993);transform-origin:0 0;">px</div>
<div class="t" id="lgd" style="left:88px;top:9.72px;font-size:21px;color:#fff;font-weight:700;letter-spacing:0px;">&#8211;</div>
<div class="t" id="lgAP" style="left:105px;top:12.12px;font-size:21.6px;color:#fff;-webkit-text-stroke:.35px #fff;transform:scaleX(1.3555);transform-origin:0 0;">AlarmPro</div>
<div class="t" id="back" style="left:313.8px;top:16.5px;font-size:15px;color:#fff;font-weight:700;letter-spacing:0.28px;">Back</div>
<div class="t" id="cr1" style="left:375.7px;top:16.5px;font-size:13px;color:#d9d6e6;letter-spacing:0.638px;">Offline Alarms</div>
<div class="t" id="cr1s" style="left:476px;top:16.5px;font-size:13px;color:#d9d6e6;">/</div>
<div class="t" id="cr2" style="left:492px;top:16.5px;font-size:13px;color:#d9d6e6;letter-spacing:0.62px;">Alarm List</div>
<div class="t" id="cr2s" style="left:565.5px;top:16.5px;font-size:13px;color:#d9d6e6;">/</div>
<div class="t" id="cr3" style="left:583.4px;top:16.5px;font-size:13px;color:#d9d6e6;letter-spacing:0.778px;">New Alarm</div>
<div class="t" id="aa" style="left:1136px;top:13.04px;font-size:18.5px;color:#fff;-webkit-text-stroke:.5px #fff;transform:scaleX(1.3832);transform-origin:0 0;">AlarmAnalysis</div>
<div class="t" id="off" style="left:54.5px;top:69.22px;font-size:17.7px;color:#4143d9;-webkit-text-stroke:.6px #4143d9;letter-spacing:0.745px;">Offline Alarms</div>
<div class="t" id="mi0" style="left:59.4px;top:103.06px;font-size:15.4px;color:#fff;letter-spacing:0.411px;">Alarm List</div>
<div class="t" id="mi1" style="left:59.4px;top:135.06px;font-size:15.4px;color:#555;letter-spacing:0.411px;">Alarm Rule Strategy</div>
<div class="t" id="mi2" style="left:59.4px;top:167.06px;font-size:15.4px;color:#555;letter-spacing:0.411px;">Approval Setting</div>
<div class="t" id="mi3" style="left:59.4px;top:199.06px;font-size:15.4px;color:#555;letter-spacing:0.411px;">DHC Dashboard</div>
<div class="t" id="mi4" style="left:59.4px;top:231.06px;font-size:15.4px;color:#555;letter-spacing:0.411px;">DHC Q'ty Check Rule</div>
<div class="t" id="mi5" style="left:59.4px;top:263.06px;font-size:15.4px;color:#555;letter-spacing:0.411px;">DHC Code Setting</div>
<div class="t" id="mi6" style="left:59.4px;top:295.06px;font-size:15.4px;color:#555;letter-spacing:0.411px;">DHC Email Task</div>
<div class="t" id="mi7" style="left:59.4px;top:327.06px;font-size:15.4px;color:#555;letter-spacing:0.411px;">B2B Email Task</div>
<div class="t" id="mi8" style="left:59.4px;top:359.06px;font-size:15.4px;color:#555;letter-spacing:0.411px;">Units Conv</div>
<div class="t" id="mi9" style="left:59.4px;top:391.06px;font-size:15.4px;color:#555;letter-spacing:0.411px;">Part Code Setting</div>
<div class="t" id="mi10" style="left:59.4px;top:423.06px;font-size:15.4px;color:#c9c9c9;letter-spacing:0.411px;">Alarm Trigger Analyze</div>
<div class="t" id="onl" style="left:55px;top:455.02px;font-size:17.7px;color:#2b2b2b;-webkit-text-stroke:.65px #2b2b2b;letter-spacing:0.621px;">Online Alarms</div>
<div class="t" id="tab1" style="left:269.8px;top:55.84px;font-size:13.3px;color:#555;letter-spacing:0.565px;">Alarm List</div>
<div class="t" id="tab2" style="left:366.8px;top:56.74px;font-size:13.3px;color:#4446da;-webkit-text-stroke:.45px #4446da;letter-spacing:0.6px;">New Alarm</div>
<div class="t" id="tabx" style="left:449px;top:58.61px;font-size:10.5px;color:#7a7ce0;">x</div>
<div class="t" id="s1n" style="left:355.5px;top:99.85px;font-size:20.5px;color:#177af0;-webkit-text-stroke:.45px #177af0;letter-spacing:-1.082px;">01</div>
<div class="t" id="s1t" style="left:384.5px;top:101.62px;font-size:18.4px;color:#177af0;-webkit-text-stroke:.5px #177af0;letter-spacing:0.252px;">Product Selectio</div>
<div class="t" id="s2n" style="left:824.4px;top:99.59px;font-size:20.8px;color:#f5930f;-webkit-text-stroke:.45px #f5930f;letter-spacing:1.607px;">02</div>
<div class="t" id="s2t" style="left:853.5px;top:101.62px;font-size:18.4px;color:#333;-webkit-text-stroke:.5px #333;letter-spacing:-0.009px;">Rule Setting</div>
<div class="t" id="s3n" style="left:1293.7px;top:100.32px;font-size:21px;color:#8a8a8a;">03</div>
<div class="t" id="cp" style="left:318.5px;top:165.94px;font-size:18.5px;color:#2f2f2f;-webkit-text-stroke:.65px #2f2f2f;letter-spacing:0.172px;">CP Alarm Setting</div>
<div class="t" id="anst" style="left:488.3px;top:168.99px;font-size:19.5px;color:#f23c3c;">*</div>
<div class="t" id="an" style="left:496px;top:167.16px;font-size:15.4px;color:#555;letter-spacing:0.81px;">Alarm Name</div>
<div class="t" id="inp" style="left:618.9px;top:168.09px;font-size:13.6px;color:#6a6a6a;letter-spacing:0.327px;">Alarm_2025-12-26_23:49:43</div>
<div class="t" id="rule" style="left:285.8px;top:215.33px;font-size:15.2px;color:#2b2b2b;-webkit-text-stroke:.55px #2b2b2b;letter-spacing:0.321px;">Rule</div>
<div class="t" id="add" style="left:471px;top:216.06px;font-size:13.4px;color:#fff;letter-spacing:0.838px;">Add</div>
<div class="t" id="ri0" style="left:308.2px;top:248.8px;font-size:12.9px;color:#333;letter-spacing:0.501px;">SYL</div>
<div class="t" id="ri1" style="left:308.2px;top:271.66px;font-size:12.9px;color:#333;letter-spacing:0.501px;">SBL</div>
<div class="t" id="ri2" style="left:308.2px;top:294.52px;font-size:12.9px;color:#333;letter-spacing:0.501px;">S2S Bin Deviation</div>
<div class="t" id="ri3" style="left:308.2px;top:317.38px;font-size:12.9px;color:#333;letter-spacing:0.501px;">S2S Parametric Fail Deviation</div>
<div class="t" id="ri4" style="left:308.2px;top:340.24px;font-size:12.9px;color:#333;letter-spacing:0.501px;">S2S Statistical Deviation</div>
<div class="t" id="ri5" style="left:308.2px;top:363.1px;font-size:12.9px;color:#4d51da;letter-spacing:0.501px;">Wafer Pattern</div>
<div class="t" id="ri6" style="left:308.2px;top:385.96px;font-size:12.9px;color:#333;letter-spacing:0.501px;">Process Check</div>
<div class="t" id="ri7" style="left:308.2px;top:408.82px;font-size:12.9px;color:#333;letter-spacing:0.501px;">Parametric Value Check</div>
<div class="t" id="ri8" style="left:308.2px;top:431.68px;font-size:12.9px;color:#333;letter-spacing:0.501px;">SBL by Site</div>
<div class="t" id="ri9" style="left:308.2px;top:454.54px;font-size:12.9px;color:#333;letter-spacing:0.501px;">CTF Parametric Check</div>
<div class="t" id="ri10" style="left:308.2px;top:477.4px;font-size:12.9px;color:#333;letter-spacing:0.501px;">Basic Stat for Parametric</div>
<div class="t" id="ri11" style="left:308.2px;top:500.26px;font-size:12.9px;color:#333;letter-spacing:0.501px;">Parametric OOS Limit（oos）</div>
<div class="t" id="ri12" style="left:308.2px;top:523.12px;font-size:12.9px;color:#333;letter-spacing:0.501px;">Parametric Executed Check</div>
<div class="t" id="ri13" style="left:308.2px;top:545.98px;font-size:12.9px;color:#333;letter-spacing:0.501px;">Wafer Zone</div>
<div class="t" id="ri14" style="left:308.2px;top:568.84px;font-size:12.9px;color:#333;letter-spacing:0.501px;">Parametric Tail Detection</div>
<div class="t" id="ri15" style="left:308.2px;top:591.7px;font-size:12.9px;color:#333;letter-spacing:0.501px;">ECID Trace Validation</div>
<div class="t" id="ri16" style="left:308.2px;top:614.56px;font-size:12.9px;color:#333;letter-spacing:0.501px;">Number of Contact Check</div>
<div class="t" id="ri17" style="left:308.2px;top:637.42px;font-size:12.9px;color:#333;letter-spacing:0.501px;">Generic Rule</div>
<div class="t" id="ri18" style="left:308.2px;top:660.28px;font-size:12.9px;color:#333;letter-spacing:0.501px;">Basic Static Multi Limit</div>
<div class="t" id="ri19" style="left:308.2px;top:683.14px;font-size:12.9px;color:#333;letter-spacing:0.501px;">Parametric Stat Baseline</div>
<div class="t" id="ri20" style="left:308.2px;top:706px;font-size:12.9px;color:#333;letter-spacing:0.501px;">Parametric Trend</div>
<div class="t" id="ri21" style="left:308.2px;top:728.86px;font-size:12.9px;color:#333;letter-spacing:0.501px;">CPC Map Verification</div>
<div class="t" id="wp" style="left:522.8px;top:211.82px;font-size:22.3px;color:#2b2b2b;-webkit-text-stroke:.75px #2b2b2b;letter-spacing:0.6px;">Wafer Pattern</div>
<div class="t" id="sas" style="left:1148.2px;top:222.89px;font-size:15.6px;color:#555;letter-spacing:0.265px;">Save as Strategy</div>
<div class="t" id="l1" style="left:646.5px;top:265.39px;font-size:15.6px;color:#444;letter-spacing:0.086px;">Rule Type:</div>
<div class="t" id="v1" style="left:736px;top:265.39px;font-size:15.6px;color:#444;letter-spacing:0.376px;">Wafer Pattern</div>
<div class="t" id="l2" style="left:626.5px;top:304.09px;font-size:15.6px;color:#444;letter-spacing:0.407px;">Calculate by:</div>
<div class="t" id="v2" style="left:736px;top:304.09px;font-size:15.6px;color:#444;letter-spacing:0.031px;">Final</div>
<div class="t" id="l3" style="left:642.2px;top:367.89px;font-size:15.6px;color:#444;letter-spacing:0.391px;">Pattern by:</div>
<div class="t" id="v3" style="left:764.2px;top:367.89px;font-size:15.6px;color:#4d51da;letter-spacing:0.307px;">Yield</div>
<div class="t" id="v3b" style="left:965px;top:367.89px;font-size:15.6px;color:#444;letter-spacing:0.445px;">Bin</div>
<div class="t" id="l4" style="left:650px;top:411.09px;font-size:15.6px;color:#444;letter-spacing:0.274px;">Check by:</div>
<div class="t" id="v4" style="left:764.2px;top:411.09px;font-size:15.6px;color:#4d51da;letter-spacing:0.253px;">Per Wafer</div>
<div class="t" id="v4b" style="left:966.7px;top:410.69px;font-size:15.6px;color:#4d51da;-webkit-text-stroke:.4px #4d51da;letter-spacing:0.445px;">by LotSrc</div>
<div class="t" id="wn00" style="left:584.9px;top:493.05px;font-size:8.8px;color:#333;letter-spacing:0.089px;">Donut</div>
<div class="t" id="wg00" style="left:614.4px;top:493.3px;font-size:8.5px;color:#333;">&gt;=</div>
<div class="t" id="wo00" style="left:627.4px;top:491.26px;font-size:10.8px;color:#9396e8;">1</div>
<div class="t" id="wn10" style="left:731.5px;top:493.05px;font-size:8.8px;color:#333;letter-spacing:0.089px;">Repeater</div>
<div class="t" id="wn20" style="left:878.1px;top:493.05px;font-size:8.8px;color:#333;letter-spacing:0.089px;">Cluster</div>
<div class="t" id="wn30" style="left:1024.7px;top:493.05px;font-size:8.8px;color:#333;letter-spacing:0.089px;">Center</div>
<div class="t" id="wg30" style="left:1055.7px;top:493.3px;font-size:8.5px;color:#333;">&gt;=</div>
<div class="t" id="wo30" style="left:1068.7px;top:491.26px;font-size:10.8px;color:#9396e8;">1</div>
<div class="t" id="wn40" style="left:1171.3px;top:493.05px;font-size:8.8px;color:#333;letter-spacing:0.089px;">Edge-Ring</div>
<div class="t" id="wn01" style="left:584.9px;top:643.05px;font-size:8.8px;color:#333;letter-spacing:0.089px;">Radiation</div>
<div class="t" id="wn11" style="left:731.5px;top:643.05px;font-size:8.8px;color:#333;letter-spacing:0.089px;">Line</div>
<svg class="abs" style="left:26px;top:11px" width="66" height="24" viewBox="0 0 66 24"><path d="M1.3 20.6 C2.5 16 5.5 12.3 10 9.8 C19 5 40 2.6 63.8 2 C45 4 33 7 24.5 10 C15.5 13.2 9 17.5 1.3 20.6Z" fill="#ff9f3a"/></svg>

<div id="blk"></div>
<svg id="frame" width="1313" height="777" viewBox="0 0 1313 777"><path fill="#fff" fill-rule="evenodd" d="M0 0H1313V777H0Z M20 0H1292.2A20 20 0 0 1 1312.2 20V756.3A20 20 0 0 1 1292.2 776.3H20A20 20 0 0 1 0 756.3V20A20 20 0 0 1 20 0Z"/><rect x="1.55" y="1.55" width="1309.05" height="773.15" rx="18.45" fill="none" stroke="#3a3dd2" stroke-width="3.1"/></svg>
</body>
</html>
